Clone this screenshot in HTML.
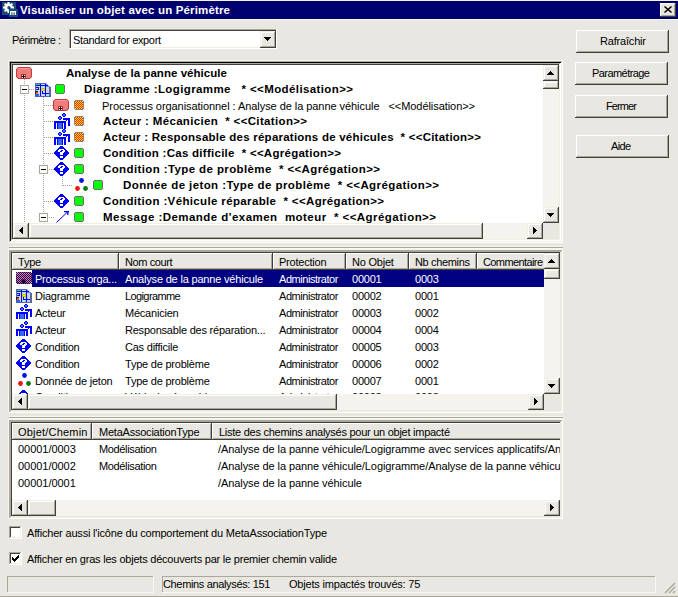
<!DOCTYPE html>
<html><head><meta charset="utf-8"><style>
html,body{margin:0;padding:0}
body{width:678px;height:597px;overflow:hidden;position:relative;background:#E8E7E1;font-family:"Liberation Sans",sans-serif;font-size:11px;color:#000}
.a{position:absolute}
.t{position:absolute;white-space:pre;line-height:13px;letter-spacing:-0.22px}
svg.ov{position:absolute;left:0;top:0}
</style></head><body>
<div class="a" style="left:0px;top:0px;width:678px;height:1px;background:#F6F5EF;"></div>
<div class="a" style="left:0px;top:1px;width:678px;height:18px;background:#000070;"></div>
<div class="a" style="left:0px;top:19px;width:678px;height:1px;background:#F8F7F2;"></div>
<div class="t" style="left:20.00px;top:4px;font-weight:bold;color:#fff;letter-spacing:0.158px;font-size:11.5px;">Visualiser un objet avec un Périmètre</div>
<div class="a" style="left:660px;top:3px;width:16px;height:14px;background:#E8E7E1;"></div>
<div class="a" style="left:660px;top:3px;width:15px;height:1px;background:#FFFFFF;"></div>
<div class="a" style="left:660px;top:3px;width:1px;height:13px;background:#FFFFFF;"></div>
<div class="a" style="left:660px;top:16px;width:16px;height:1px;background:#404040;"></div>
<div class="a" style="left:675px;top:3px;width:1px;height:14px;background:#404040;"></div>
<div class="a" style="left:661px;top:15px;width:14px;height:1px;background:#ACA899;"></div>
<div class="a" style="left:674px;top:4px;width:1px;height:12px;background:#ACA899;"></div>
<div class="t" style="left:12.00px;top:34px;letter-spacing:-0.480px;">Périmètre :</div>
<div class="a" style="left:69px;top:29px;width:208px;height:20px;background:#FFFFFF;"></div>
<div class="a" style="left:69px;top:29px;width:208px;height:1px;background:#ACA899;"></div>
<div class="a" style="left:69px;top:29px;width:1px;height:20px;background:#ACA899;"></div>
<div class="a" style="left:70px;top:30px;width:206px;height:1px;background:#404040;"></div>
<div class="a" style="left:70px;top:30px;width:1px;height:18px;background:#404040;"></div>
<div class="a" style="left:71px;top:47px;width:189px;height:1px;background:#F1EFE2;"></div>
<div class="a" style="left:69px;top:48px;width:208px;height:1px;background:#FFFFFF;"></div>
<div class="a" style="left:276px;top:29px;width:1px;height:20px;background:#FFFFFF;"></div>
<div class="t" style="left:73.00px;top:34px;letter-spacing:-0.342px;">Standard for export</div>
<div class="a" style="left:576px;top:30px;width:93px;height:23px;background:#E8E7E1;"></div>
<div class="a" style="left:576px;top:30px;width:92px;height:1px;background:#FFFFFF;"></div>
<div class="a" style="left:576px;top:30px;width:1px;height:22px;background:#FFFFFF;"></div>
<div class="a" style="left:576px;top:52px;width:93px;height:1px;background:#404040;"></div>
<div class="a" style="left:668px;top:30px;width:1px;height:23px;background:#404040;"></div>
<div class="a" style="left:577px;top:51px;width:91px;height:1px;background:#ACA899;"></div>
<div class="a" style="left:667px;top:31px;width:1px;height:21px;background:#ACA899;"></div>
<div class="t" style="left:600.00px;top:35px;letter-spacing:-0.189px;">Rafraîchir</div>
<div class="a" style="left:575px;top:62px;width:93px;height:23px;background:#E8E7E1;"></div>
<div class="a" style="left:575px;top:62px;width:92px;height:1px;background:#FFFFFF;"></div>
<div class="a" style="left:575px;top:62px;width:1px;height:22px;background:#FFFFFF;"></div>
<div class="a" style="left:575px;top:84px;width:93px;height:1px;background:#404040;"></div>
<div class="a" style="left:667px;top:62px;width:1px;height:23px;background:#404040;"></div>
<div class="a" style="left:576px;top:83px;width:91px;height:1px;background:#ACA899;"></div>
<div class="a" style="left:666px;top:63px;width:1px;height:21px;background:#ACA899;"></div>
<div class="t" style="left:592.00px;top:67px;letter-spacing:-0.560px;">Paramétrage</div>
<div class="a" style="left:575px;top:95px;width:93px;height:23px;background:#E8E7E1;"></div>
<div class="a" style="left:575px;top:95px;width:92px;height:1px;background:#FFFFFF;"></div>
<div class="a" style="left:575px;top:95px;width:1px;height:22px;background:#FFFFFF;"></div>
<div class="a" style="left:575px;top:117px;width:93px;height:1px;background:#404040;"></div>
<div class="a" style="left:667px;top:95px;width:1px;height:23px;background:#404040;"></div>
<div class="a" style="left:576px;top:116px;width:91px;height:1px;background:#ACA899;"></div>
<div class="a" style="left:666px;top:96px;width:1px;height:21px;background:#ACA899;"></div>
<div class="t" style="left:606.00px;top:100px;letter-spacing:-0.890px;">Fermer</div>
<div class="a" style="left:576px;top:135px;width:93px;height:23px;background:#E8E7E1;"></div>
<div class="a" style="left:576px;top:135px;width:92px;height:1px;background:#FFFFFF;"></div>
<div class="a" style="left:576px;top:135px;width:1px;height:22px;background:#FFFFFF;"></div>
<div class="a" style="left:576px;top:157px;width:93px;height:1px;background:#404040;"></div>
<div class="a" style="left:668px;top:135px;width:1px;height:23px;background:#404040;"></div>
<div class="a" style="left:577px;top:156px;width:91px;height:1px;background:#ACA899;"></div>
<div class="a" style="left:667px;top:136px;width:1px;height:21px;background:#ACA899;"></div>
<div class="t" style="left:611.00px;top:140px;letter-spacing:-0.667px;">Aide</div>
<div class="a" style="left:260px;top:31px;width:16px;height:17px;background:#E8E7E1;"></div>
<div class="a" style="left:260px;top:31px;width:16px;height:1px;background:#F1EFE2;"></div>
<div class="a" style="left:260px;top:31px;width:1px;height:17px;background:#F1EFE2;"></div>
<div class="a" style="left:261px;top:32px;width:14px;height:1px;background:#FFFFFF;"></div>
<div class="a" style="left:261px;top:32px;width:1px;height:15px;background:#FFFFFF;"></div>
<div class="a" style="left:260px;top:47px;width:16px;height:1px;background:#404040;"></div>
<div class="a" style="left:275px;top:31px;width:1px;height:17px;background:#404040;"></div>
<div class="a" style="left:261px;top:46px;width:14px;height:1px;background:#ACA899;"></div>
<div class="a" style="left:274px;top:32px;width:1px;height:15px;background:#ACA899;"></div>
<div class="a" style="left:8px;top:60px;width:555px;height:1px;background:#F5F4F0;"></div>
<div class="a" style="left:8px;top:60px;width:1px;height:183px;background:#F5F4F0;"></div>
<div class="a" style="left:9px;top:61px;width:554px;height:1px;background:#ACA899;"></div>
<div class="a" style="left:9px;top:61px;width:1px;height:182px;background:#ACA899;"></div>
<div class="a" style="left:9px;top:242px;width:554px;height:1px;background:#FFFFFF;"></div>
<div class="a" style="left:562px;top:61px;width:1px;height:182px;background:#FFFFFF;"></div>
<div class="a" style="left:10px;top:62px;width:552px;height:1px;background:#000;"></div>
<div class="a" style="left:10px;top:62px;width:1px;height:180px;background:#000;"></div>
<div class="a" style="left:10px;top:241px;width:552px;height:1px;background:#F1EFE2;"></div>
<div class="a" style="left:561px;top:62px;width:1px;height:180px;background:#F1EFE2;"></div>
<div class="a" style="left:11px;top:63px;width:550px;height:1px;background:#ACA899;"></div>
<div class="a" style="left:11px;top:63px;width:1px;height:178px;background:#ACA899;"></div>
<div class="a" style="left:11px;top:240px;width:550px;height:1px;background:#FFFFFF;"></div>
<div class="a" style="left:560px;top:63px;width:1px;height:178px;background:#FFFFFF;"></div>
<div class="a" style="left:12px;top:64px;width:548px;height:1px;background:#404040;"></div>
<div class="a" style="left:12px;top:64px;width:1px;height:176px;background:#404040;"></div>
<div class="a" style="left:12px;top:239px;width:548px;height:1px;background:#F1EFE2;"></div>
<div class="a" style="left:559px;top:64px;width:1px;height:176px;background:#F1EFE2;"></div>
<div class="a" style="left:13px;top:65px;width:546px;height:174px;background:#fff;"></div>
<div class="t" style="left:66.00px;top:67px;font-weight:bold;letter-spacing:0.044px;font-size:11.5px;">Analyse de la panne véhicule</div>
<div class="t" style="left:84.00px;top:83px;font-weight:bold;letter-spacing:0.388px;font-size:11.5px;">Diagramme :Logigramme   * &lt;&lt;Modélisation&gt;&gt;</div>
<div class="t" style="left:102.00px;top:100px;letter-spacing:-0.058px;">Processus organisationnel : Analyse de la panne véhicule   &lt;&lt;Modélisation&gt;&gt;</div>
<div class="t" style="left:103.00px;top:115px;font-weight:bold;letter-spacing:0.343px;font-size:11.5px;">Acteur : Mécanicien  * &lt;&lt;Citation&gt;&gt;</div>
<div class="t" style="left:103.00px;top:131px;font-weight:bold;letter-spacing:0.234px;font-size:11.5px;">Acteur : Responsable des réparations de véhicules  * &lt;&lt;Citation&gt;&gt;</div>
<div class="t" style="left:103.00px;top:147px;font-weight:bold;letter-spacing:0.272px;font-size:11.5px;">Condition :Cas difficile  * &lt;&lt;Agrégation&gt;&gt;</div>
<div class="t" style="left:103.00px;top:163px;font-weight:bold;letter-spacing:0.390px;font-size:11.5px;">Condition :Type de problème  * &lt;&lt;Agrégation&gt;&gt;</div>
<div class="t" style="left:123.00px;top:179px;font-weight:bold;letter-spacing:0.407px;font-size:11.5px;">Donnée de jeton :Type de problème  * &lt;&lt;Agrégation&gt;&gt;</div>
<div class="t" style="left:103.00px;top:195px;font-weight:bold;letter-spacing:0.358px;font-size:11.5px;">Condition :Véhicule réparable  * &lt;&lt;Agrégation&gt;&gt;</div>
<div class="t" style="left:103.00px;top:211px;font-weight:bold;letter-spacing:0.457px;font-size:11.5px;">Message :Demande d&#x27;examen  moteur  * &lt;&lt;Agrégation&gt;&gt;</div>
<svg class="ov" width="678" height="597" viewBox="0 0 678 597"><path d="M664.5 6.5 L671.5 12.5 M671.5 6.5 L664.5 12.5" stroke="#000" stroke-width="1.6" fill="none"/><rect x="2" y="2" width="14" height="13" fill="#1B4C78"/><rect x="9" y="9" width="9" height="8" fill="#1B4C78"/><g fill="#fff"><circle cx="8.5" cy="7.5" r="4.2"/><rect x="7.5" y="2" width="2" height="2.5" transform="rotate(0 8.5 7.5)"/><rect x="7.5" y="2" width="2" height="2.5" transform="rotate(45 8.5 7.5)"/><rect x="7.5" y="2" width="2" height="2.5" transform="rotate(90 8.5 7.5)"/><rect x="7.5" y="2" width="2" height="2.5" transform="rotate(135 8.5 7.5)"/><rect x="7.5" y="2" width="2" height="2.5" transform="rotate(180 8.5 7.5)"/><rect x="7.5" y="2" width="2" height="2.5" transform="rotate(225 8.5 7.5)"/><rect x="7.5" y="2" width="2" height="2.5" transform="rotate(270 8.5 7.5)"/><rect x="7.5" y="2" width="2" height="2.5" transform="rotate(315 8.5 7.5)"/></g><circle cx="9" cy="7.8" r="1.7" fill="#1B4C78"/><path d="M9 7.8 L14 12.5 L14 9 Z" fill="#1B4C78"/><rect x="9" y="9" width="9" height="8" fill="#1B4C78"/><g fill="#fff"><rect x="10" y="11" width="6" height="1.3"/><rect x="10" y="11" width="1.3" height="4"/><rect x="12.4" y="11" width="1.2" height="4"/><rect x="14.7" y="11" width="1.3" height="4"/></g><rect x="264" y="37" width="7" height="1" fill="#000"/><rect x="265" y="38" width="5" height="1" fill="#000"/><rect x="266" y="39" width="3" height="1" fill="#000"/><rect x="267" y="40" width="1" height="1" fill="#000"/><rect x="24" y="79" width="1" height="1" fill="#A8A498"/><rect x="24" y="81" width="1" height="1" fill="#A8A498"/><rect x="24" y="83" width="1" height="1" fill="#A8A498"/><rect x="24" y="85" width="1" height="1" fill="#A8A498"/><rect x="24" y="87" width="1" height="1" fill="#A8A498"/><rect x="24" y="89" width="1" height="1" fill="#A8A498"/><rect x="24" y="91" width="1" height="1" fill="#A8A498"/><rect x="24" y="93" width="1" height="1" fill="#A8A498"/><rect x="24" y="95" width="1" height="1" fill="#A8A498"/><rect x="24" y="97" width="1" height="1" fill="#A8A498"/><rect x="24" y="99" width="1" height="1" fill="#A8A498"/><rect x="24" y="101" width="1" height="1" fill="#A8A498"/><rect x="24" y="103" width="1" height="1" fill="#A8A498"/><rect x="24" y="105" width="1" height="1" fill="#A8A498"/><rect x="24" y="107" width="1" height="1" fill="#A8A498"/><rect x="24" y="109" width="1" height="1" fill="#A8A498"/><rect x="24" y="111" width="1" height="1" fill="#A8A498"/><rect x="24" y="113" width="1" height="1" fill="#A8A498"/><rect x="24" y="115" width="1" height="1" fill="#A8A498"/><rect x="24" y="117" width="1" height="1" fill="#A8A498"/><rect x="24" y="119" width="1" height="1" fill="#A8A498"/><rect x="24" y="121" width="1" height="1" fill="#A8A498"/><rect x="24" y="123" width="1" height="1" fill="#A8A498"/><rect x="24" y="125" width="1" height="1" fill="#A8A498"/><rect x="24" y="127" width="1" height="1" fill="#A8A498"/><rect x="24" y="129" width="1" height="1" fill="#A8A498"/><rect x="24" y="131" width="1" height="1" fill="#A8A498"/><rect x="24" y="133" width="1" height="1" fill="#A8A498"/><rect x="24" y="135" width="1" height="1" fill="#A8A498"/><rect x="24" y="137" width="1" height="1" fill="#A8A498"/><rect x="24" y="139" width="1" height="1" fill="#A8A498"/><rect x="24" y="141" width="1" height="1" fill="#A8A498"/><rect x="24" y="143" width="1" height="1" fill="#A8A498"/><rect x="24" y="145" width="1" height="1" fill="#A8A498"/><rect x="24" y="147" width="1" height="1" fill="#A8A498"/><rect x="24" y="149" width="1" height="1" fill="#A8A498"/><rect x="24" y="151" width="1" height="1" fill="#A8A498"/><rect x="24" y="153" width="1" height="1" fill="#A8A498"/><rect x="24" y="155" width="1" height="1" fill="#A8A498"/><rect x="24" y="157" width="1" height="1" fill="#A8A498"/><rect x="24" y="159" width="1" height="1" fill="#A8A498"/><rect x="24" y="161" width="1" height="1" fill="#A8A498"/><rect x="24" y="163" width="1" height="1" fill="#A8A498"/><rect x="24" y="165" width="1" height="1" fill="#A8A498"/><rect x="24" y="167" width="1" height="1" fill="#A8A498"/><rect x="24" y="169" width="1" height="1" fill="#A8A498"/><rect x="24" y="171" width="1" height="1" fill="#A8A498"/><rect x="24" y="173" width="1" height="1" fill="#A8A498"/><rect x="24" y="175" width="1" height="1" fill="#A8A498"/><rect x="24" y="177" width="1" height="1" fill="#A8A498"/><rect x="24" y="179" width="1" height="1" fill="#A8A498"/><rect x="24" y="181" width="1" height="1" fill="#A8A498"/><rect x="24" y="183" width="1" height="1" fill="#A8A498"/><rect x="24" y="185" width="1" height="1" fill="#A8A498"/><rect x="24" y="187" width="1" height="1" fill="#A8A498"/><rect x="24" y="189" width="1" height="1" fill="#A8A498"/><rect x="24" y="191" width="1" height="1" fill="#A8A498"/><rect x="24" y="193" width="1" height="1" fill="#A8A498"/><rect x="24" y="195" width="1" height="1" fill="#A8A498"/><rect x="24" y="197" width="1" height="1" fill="#A8A498"/><rect x="24" y="199" width="1" height="1" fill="#A8A498"/><rect x="24" y="201" width="1" height="1" fill="#A8A498"/><rect x="24" y="203" width="1" height="1" fill="#A8A498"/><rect x="24" y="205" width="1" height="1" fill="#A8A498"/><rect x="24" y="207" width="1" height="1" fill="#A8A498"/><rect x="24" y="209" width="1" height="1" fill="#A8A498"/><rect x="24" y="211" width="1" height="1" fill="#A8A498"/><rect x="24" y="213" width="1" height="1" fill="#A8A498"/><rect x="24" y="215" width="1" height="1" fill="#A8A498"/><rect x="24" y="217" width="1" height="1" fill="#A8A498"/><rect x="24" y="219" width="1" height="1" fill="#A8A498"/><rect x="24" y="221" width="1" height="1" fill="#A8A498"/><rect x="43" y="97" width="1" height="1" fill="#A8A498"/><rect x="43" y="99" width="1" height="1" fill="#A8A498"/><rect x="43" y="101" width="1" height="1" fill="#A8A498"/><rect x="43" y="103" width="1" height="1" fill="#A8A498"/><rect x="43" y="105" width="1" height="1" fill="#A8A498"/><rect x="43" y="107" width="1" height="1" fill="#A8A498"/><rect x="43" y="109" width="1" height="1" fill="#A8A498"/><rect x="43" y="111" width="1" height="1" fill="#A8A498"/><rect x="43" y="113" width="1" height="1" fill="#A8A498"/><rect x="43" y="115" width="1" height="1" fill="#A8A498"/><rect x="43" y="117" width="1" height="1" fill="#A8A498"/><rect x="43" y="119" width="1" height="1" fill="#A8A498"/><rect x="43" y="121" width="1" height="1" fill="#A8A498"/><rect x="43" y="123" width="1" height="1" fill="#A8A498"/><rect x="43" y="125" width="1" height="1" fill="#A8A498"/><rect x="43" y="127" width="1" height="1" fill="#A8A498"/><rect x="43" y="129" width="1" height="1" fill="#A8A498"/><rect x="43" y="131" width="1" height="1" fill="#A8A498"/><rect x="43" y="133" width="1" height="1" fill="#A8A498"/><rect x="43" y="135" width="1" height="1" fill="#A8A498"/><rect x="43" y="137" width="1" height="1" fill="#A8A498"/><rect x="43" y="139" width="1" height="1" fill="#A8A498"/><rect x="43" y="141" width="1" height="1" fill="#A8A498"/><rect x="43" y="143" width="1" height="1" fill="#A8A498"/><rect x="43" y="145" width="1" height="1" fill="#A8A498"/><rect x="43" y="147" width="1" height="1" fill="#A8A498"/><rect x="43" y="149" width="1" height="1" fill="#A8A498"/><rect x="43" y="151" width="1" height="1" fill="#A8A498"/><rect x="43" y="153" width="1" height="1" fill="#A8A498"/><rect x="43" y="155" width="1" height="1" fill="#A8A498"/><rect x="43" y="157" width="1" height="1" fill="#A8A498"/><rect x="43" y="159" width="1" height="1" fill="#A8A498"/><rect x="43" y="161" width="1" height="1" fill="#A8A498"/><rect x="43" y="163" width="1" height="1" fill="#A8A498"/><rect x="43" y="165" width="1" height="1" fill="#A8A498"/><rect x="43" y="167" width="1" height="1" fill="#A8A498"/><rect x="43" y="169" width="1" height="1" fill="#A8A498"/><rect x="43" y="171" width="1" height="1" fill="#A8A498"/><rect x="43" y="173" width="1" height="1" fill="#A8A498"/><rect x="43" y="175" width="1" height="1" fill="#A8A498"/><rect x="43" y="177" width="1" height="1" fill="#A8A498"/><rect x="43" y="179" width="1" height="1" fill="#A8A498"/><rect x="43" y="181" width="1" height="1" fill="#A8A498"/><rect x="43" y="183" width="1" height="1" fill="#A8A498"/><rect x="43" y="185" width="1" height="1" fill="#A8A498"/><rect x="43" y="187" width="1" height="1" fill="#A8A498"/><rect x="43" y="189" width="1" height="1" fill="#A8A498"/><rect x="43" y="191" width="1" height="1" fill="#A8A498"/><rect x="43" y="193" width="1" height="1" fill="#A8A498"/><rect x="43" y="195" width="1" height="1" fill="#A8A498"/><rect x="43" y="197" width="1" height="1" fill="#A8A498"/><rect x="43" y="199" width="1" height="1" fill="#A8A498"/><rect x="43" y="201" width="1" height="1" fill="#A8A498"/><rect x="43" y="203" width="1" height="1" fill="#A8A498"/><rect x="43" y="205" width="1" height="1" fill="#A8A498"/><rect x="43" y="207" width="1" height="1" fill="#A8A498"/><rect x="43" y="209" width="1" height="1" fill="#A8A498"/><rect x="43" y="211" width="1" height="1" fill="#A8A498"/><rect x="43" y="213" width="1" height="1" fill="#A8A498"/><rect x="43" y="215" width="1" height="1" fill="#A8A498"/><rect x="43" y="217" width="1" height="1" fill="#A8A498"/><rect x="29" y="89" width="1" height="1" fill="#A8A498"/><rect x="31" y="89" width="1" height="1" fill="#A8A498"/><rect x="33" y="89" width="1" height="1" fill="#A8A498"/><rect x="44" y="105" width="1" height="1" fill="#A8A498"/><rect x="46" y="105" width="1" height="1" fill="#A8A498"/><rect x="48" y="105" width="1" height="1" fill="#A8A498"/><rect x="50" y="105" width="1" height="1" fill="#A8A498"/><rect x="52" y="105" width="1" height="1" fill="#A8A498"/><rect x="44" y="121" width="1" height="1" fill="#A8A498"/><rect x="46" y="121" width="1" height="1" fill="#A8A498"/><rect x="48" y="121" width="1" height="1" fill="#A8A498"/><rect x="50" y="121" width="1" height="1" fill="#A8A498"/><rect x="52" y="121" width="1" height="1" fill="#A8A498"/><rect x="44" y="137" width="1" height="1" fill="#A8A498"/><rect x="46" y="137" width="1" height="1" fill="#A8A498"/><rect x="48" y="137" width="1" height="1" fill="#A8A498"/><rect x="50" y="137" width="1" height="1" fill="#A8A498"/><rect x="52" y="137" width="1" height="1" fill="#A8A498"/><rect x="44" y="153" width="1" height="1" fill="#A8A498"/><rect x="46" y="153" width="1" height="1" fill="#A8A498"/><rect x="48" y="153" width="1" height="1" fill="#A8A498"/><rect x="50" y="153" width="1" height="1" fill="#A8A498"/><rect x="52" y="153" width="1" height="1" fill="#A8A498"/><rect x="44" y="201" width="1" height="1" fill="#A8A498"/><rect x="46" y="201" width="1" height="1" fill="#A8A498"/><rect x="48" y="201" width="1" height="1" fill="#A8A498"/><rect x="50" y="201" width="1" height="1" fill="#A8A498"/><rect x="52" y="201" width="1" height="1" fill="#A8A498"/><rect x="49" y="169" width="1" height="1" fill="#A8A498"/><rect x="51" y="169" width="1" height="1" fill="#A8A498"/><rect x="53" y="169" width="1" height="1" fill="#A8A498"/><rect x="49" y="217" width="1" height="1" fill="#A8A498"/><rect x="51" y="217" width="1" height="1" fill="#A8A498"/><rect x="53" y="217" width="1" height="1" fill="#A8A498"/><rect x="62" y="177" width="1" height="1" fill="#A8A498"/><rect x="62" y="179" width="1" height="1" fill="#A8A498"/><rect x="62" y="181" width="1" height="1" fill="#A8A498"/><rect x="62" y="183" width="1" height="1" fill="#A8A498"/><rect x="62" y="185" width="1" height="1" fill="#A8A498"/><rect x="63" y="185" width="1" height="1" fill="#A8A498"/><rect x="65" y="185" width="1" height="1" fill="#A8A498"/><rect x="67" y="185" width="1" height="1" fill="#A8A498"/><rect x="69" y="185" width="1" height="1" fill="#A8A498"/><rect x="71" y="185" width="1" height="1" fill="#A8A498"/><polygon points="18,67 30,67 32,69 32,77 30,79 18,79 16,77 16,69" fill="#F07C7C" stroke="none"/><rect x="18" y="67" width="12" height="1" fill="#C03A36"/><rect x="18" y="78" width="12" height="1" fill="#C03A36"/><rect x="16" y="69" width="1" height="8" fill="#C03A36"/><rect x="31" y="69" width="1" height="8" fill="#C03A36"/><rect x="17" y="68" width="1" height="1" fill="#C03A36"/><rect x="30" y="68" width="1" height="1" fill="#C03A36"/><rect x="17" y="77" width="1" height="1" fill="#C03A36"/><rect x="30" y="77" width="1" height="1" fill="#C03A36"/><rect x="18" y="68" width="12" height="1" fill="#F49A9A"/><rect x="21" y="74" width="5" height="5" fill="#B03030"/><rect x="22" y="75" width="3" height="3" fill="#fff"/><rect x="23" y="75" width="1" height="3" fill="#000"/><rect x="22" y="76" width="3" height="1" fill="#000"/><rect x="29" y="75" width="1" height="2" fill="#A88"/><rect x="20" y="85" width="9" height="1" fill="#ACA899"/><rect x="20" y="93" width="9" height="1" fill="#ACA899"/><rect x="20" y="85" width="1" height="9" fill="#ACA899"/><rect x="28" y="85" width="1" height="9" fill="#ACA899"/><rect x="21" y="86" width="7" height="7" fill="#fff"/><rect x="22" y="89" width="5" height="1" fill="#000"/><rect x="35" y="83" width="15" height="14" fill="#5A64A8"/><rect x="36" y="84" width="13" height="12" fill="#C4D8F6"/><rect x="46" y="83" width="4" height="3" fill="#fff"/><polygon points="46,83 50,87 46,87" fill="#7090D0"/><rect x="50" y="87" width="1" height="10" fill="#5A64A8"/><rect x="36" y="84" width="4" height="1" fill="#40D040"/><rect x="41" y="84" width="4" height="1" fill="#A0E8F8"/><rect x="36" y="85" width="12" height="1" fill="#0000FF"/><rect x="40" y="84" width="1" height="12" fill="#0000FF"/><rect x="45" y="84" width="1" height="12" fill="#0000FF"/><rect x="36" y="87" width="3" height="1" fill="#0000FF"/><rect x="38" y="87" width="1" height="3" fill="#0000FF"/><rect x="36" y="89" width="3" height="1" fill="#0000FF"/><rect x="41" y="88" width="4" height="3" fill="#C8C000"/><rect x="42" y="89" width="2" height="1" fill="#FFFF00"/><rect x="42" y="91" width="1" height="3" fill="#0000FF"/><rect x="42" y="93" width="7" height="1" fill="#0000FF"/><rect x="35" y="91" width="3" height="3" fill="#202020"/><rect x="36" y="92" width="2" height="2" fill="#FF6010"/><rect x="35" y="94" width="4" height="3" fill="#3060E0"/><rect x="56" y="84" width="8" height="1" fill="#7A6A7A"/><rect x="56" y="93" width="8" height="1" fill="#7A6A7A"/><rect x="55" y="85" width="1" height="8" fill="#7A6A7A"/><rect x="64" y="85" width="1" height="8" fill="#7A6A7A"/><rect x="56" y="85" width="8" height="8" fill="#00FF00"/><polygon points="55,99 67,99 69,101 69,109 67,111 55,111 53,109 53,101" fill="#F07C7C" stroke="none"/><rect x="55" y="99" width="12" height="1" fill="#C03A36"/><rect x="55" y="110" width="12" height="1" fill="#C03A36"/><rect x="53" y="101" width="1" height="8" fill="#C03A36"/><rect x="68" y="101" width="1" height="8" fill="#C03A36"/><rect x="54" y="100" width="1" height="1" fill="#C03A36"/><rect x="67" y="100" width="1" height="1" fill="#C03A36"/><rect x="54" y="109" width="1" height="1" fill="#C03A36"/><rect x="67" y="109" width="1" height="1" fill="#C03A36"/><rect x="55" y="100" width="12" height="1" fill="#F49A9A"/><rect x="58" y="106" width="5" height="5" fill="#B03030"/><rect x="59" y="107" width="3" height="3" fill="#fff"/><rect x="60" y="107" width="1" height="3" fill="#000"/><rect x="59" y="108" width="3" height="1" fill="#000"/><rect x="66" y="107" width="1" height="2" fill="#A88"/><rect x="75" y="100" width="8" height="1" fill="#888"/><rect x="75" y="109" width="8" height="1" fill="#888"/><rect x="74" y="101" width="1" height="8" fill="#888"/><rect x="83" y="101" width="1" height="8" fill="#888"/><rect x="75" y="101" width="8" height="8" fill="#FFD400"/><rect x="75" y="101" width="1" height="1" fill="#FF2A00"/><rect x="77" y="101" width="1" height="1" fill="#FF2A00"/><rect x="79" y="101" width="1" height="1" fill="#FF2A00"/><rect x="81" y="101" width="1" height="1" fill="#FF2A00"/><rect x="76" y="102" width="1" height="1" fill="#FF2A00"/><rect x="78" y="102" width="1" height="1" fill="#FF2A00"/><rect x="80" y="102" width="1" height="1" fill="#FF2A00"/><rect x="82" y="102" width="1" height="1" fill="#FF2A00"/><rect x="75" y="103" width="1" height="1" fill="#FF2A00"/><rect x="77" y="103" width="1" height="1" fill="#FF2A00"/><rect x="79" y="103" width="1" height="1" fill="#FF2A00"/><rect x="81" y="103" width="1" height="1" fill="#FF2A00"/><rect x="76" y="104" width="1" height="1" fill="#FF2A00"/><rect x="78" y="104" width="1" height="1" fill="#FF2A00"/><rect x="80" y="104" width="1" height="1" fill="#FF2A00"/><rect x="82" y="104" width="1" height="1" fill="#FF2A00"/><rect x="75" y="105" width="1" height="1" fill="#FF2A00"/><rect x="77" y="105" width="1" height="1" fill="#FF2A00"/><rect x="79" y="105" width="1" height="1" fill="#FF2A00"/><rect x="81" y="105" width="1" height="1" fill="#FF2A00"/><rect x="76" y="106" width="1" height="1" fill="#FF2A00"/><rect x="78" y="106" width="1" height="1" fill="#FF2A00"/><rect x="80" y="106" width="1" height="1" fill="#FF2A00"/><rect x="82" y="106" width="1" height="1" fill="#FF2A00"/><rect x="75" y="107" width="1" height="1" fill="#FF2A00"/><rect x="77" y="107" width="1" height="1" fill="#FF2A00"/><rect x="79" y="107" width="1" height="1" fill="#FF2A00"/><rect x="81" y="107" width="1" height="1" fill="#FF2A00"/><rect x="76" y="108" width="1" height="1" fill="#FF2A00"/><rect x="78" y="108" width="1" height="1" fill="#FF2A00"/><rect x="80" y="108" width="1" height="1" fill="#FF2A00"/><rect x="82" y="108" width="1" height="1" fill="#FF2A00"/><rect x="63" y="113" width="2" height="1" fill="#0000FF"/><rect x="62" y="114" width="4" height="2" fill="#0000FF"/><rect x="63" y="116" width="2" height="1" fill="#0000FF"/><rect x="63" y="114" width="2" height="2" fill="#3366FF"/><rect x="59" y="116" width="2" height="1" fill="#0000FF"/><rect x="58" y="117" width="4" height="2" fill="#0000FF"/><rect x="59" y="119" width="2" height="1" fill="#0000FF"/><rect x="59" y="117" width="2" height="2" fill="#3366FF"/><rect x="63" y="118" width="6" height="2" fill="#0000FF"/><rect x="68" y="118" width="2" height="8" fill="#0000FF"/><rect x="66" y="120" width="1" height="1" fill="#0000FF"/><rect x="54" y="121" width="12" height="2" fill="#0000FF"/><rect x="54" y="122" width="2" height="7" fill="#0000FF"/><rect x="64" y="122" width="2" height="7" fill="#0000FF"/><rect x="57" y="123" width="6" height="6" fill="#3366FF"/><rect x="57" y="123" width="1" height="6" fill="#0000FF"/><rect x="62" y="123" width="1" height="6" fill="#0000FF"/><rect x="75" y="116" width="8" height="1" fill="#888"/><rect x="75" y="125" width="8" height="1" fill="#888"/><rect x="74" y="117" width="1" height="8" fill="#888"/><rect x="83" y="117" width="1" height="8" fill="#888"/><rect x="75" y="117" width="8" height="8" fill="#FFD400"/><rect x="75" y="117" width="1" height="1" fill="#FF2A00"/><rect x="77" y="117" width="1" height="1" fill="#FF2A00"/><rect x="79" y="117" width="1" height="1" fill="#FF2A00"/><rect x="81" y="117" width="1" height="1" fill="#FF2A00"/><rect x="76" y="118" width="1" height="1" fill="#FF2A00"/><rect x="78" y="118" width="1" height="1" fill="#FF2A00"/><rect x="80" y="118" width="1" height="1" fill="#FF2A00"/><rect x="82" y="118" width="1" height="1" fill="#FF2A00"/><rect x="75" y="119" width="1" height="1" fill="#FF2A00"/><rect x="77" y="119" width="1" height="1" fill="#FF2A00"/><rect x="79" y="119" width="1" height="1" fill="#FF2A00"/><rect x="81" y="119" width="1" height="1" fill="#FF2A00"/><rect x="76" y="120" width="1" height="1" fill="#FF2A00"/><rect x="78" y="120" width="1" height="1" fill="#FF2A00"/><rect x="80" y="120" width="1" height="1" fill="#FF2A00"/><rect x="82" y="120" width="1" height="1" fill="#FF2A00"/><rect x="75" y="121" width="1" height="1" fill="#FF2A00"/><rect x="77" y="121" width="1" height="1" fill="#FF2A00"/><rect x="79" y="121" width="1" height="1" fill="#FF2A00"/><rect x="81" y="121" width="1" height="1" fill="#FF2A00"/><rect x="76" y="122" width="1" height="1" fill="#FF2A00"/><rect x="78" y="122" width="1" height="1" fill="#FF2A00"/><rect x="80" y="122" width="1" height="1" fill="#FF2A00"/><rect x="82" y="122" width="1" height="1" fill="#FF2A00"/><rect x="75" y="123" width="1" height="1" fill="#FF2A00"/><rect x="77" y="123" width="1" height="1" fill="#FF2A00"/><rect x="79" y="123" width="1" height="1" fill="#FF2A00"/><rect x="81" y="123" width="1" height="1" fill="#FF2A00"/><rect x="76" y="124" width="1" height="1" fill="#FF2A00"/><rect x="78" y="124" width="1" height="1" fill="#FF2A00"/><rect x="80" y="124" width="1" height="1" fill="#FF2A00"/><rect x="82" y="124" width="1" height="1" fill="#FF2A00"/><rect x="63" y="129" width="2" height="1" fill="#0000FF"/><rect x="62" y="130" width="4" height="2" fill="#0000FF"/><rect x="63" y="132" width="2" height="1" fill="#0000FF"/><rect x="63" y="130" width="2" height="2" fill="#3366FF"/><rect x="59" y="132" width="2" height="1" fill="#0000FF"/><rect x="58" y="133" width="4" height="2" fill="#0000FF"/><rect x="59" y="135" width="2" height="1" fill="#0000FF"/><rect x="59" y="133" width="2" height="2" fill="#3366FF"/><rect x="63" y="134" width="6" height="2" fill="#0000FF"/><rect x="68" y="134" width="2" height="8" fill="#0000FF"/><rect x="66" y="136" width="1" height="1" fill="#0000FF"/><rect x="54" y="137" width="12" height="2" fill="#0000FF"/><rect x="54" y="138" width="2" height="7" fill="#0000FF"/><rect x="64" y="138" width="2" height="7" fill="#0000FF"/><rect x="57" y="139" width="6" height="6" fill="#3366FF"/><rect x="57" y="139" width="1" height="6" fill="#0000FF"/><rect x="62" y="139" width="1" height="6" fill="#0000FF"/><rect x="75" y="132" width="8" height="1" fill="#888"/><rect x="75" y="141" width="8" height="1" fill="#888"/><rect x="74" y="133" width="1" height="8" fill="#888"/><rect x="83" y="133" width="1" height="8" fill="#888"/><rect x="75" y="133" width="8" height="8" fill="#FFD400"/><rect x="75" y="133" width="1" height="1" fill="#FF2A00"/><rect x="77" y="133" width="1" height="1" fill="#FF2A00"/><rect x="79" y="133" width="1" height="1" fill="#FF2A00"/><rect x="81" y="133" width="1" height="1" fill="#FF2A00"/><rect x="76" y="134" width="1" height="1" fill="#FF2A00"/><rect x="78" y="134" width="1" height="1" fill="#FF2A00"/><rect x="80" y="134" width="1" height="1" fill="#FF2A00"/><rect x="82" y="134" width="1" height="1" fill="#FF2A00"/><rect x="75" y="135" width="1" height="1" fill="#FF2A00"/><rect x="77" y="135" width="1" height="1" fill="#FF2A00"/><rect x="79" y="135" width="1" height="1" fill="#FF2A00"/><rect x="81" y="135" width="1" height="1" fill="#FF2A00"/><rect x="76" y="136" width="1" height="1" fill="#FF2A00"/><rect x="78" y="136" width="1" height="1" fill="#FF2A00"/><rect x="80" y="136" width="1" height="1" fill="#FF2A00"/><rect x="82" y="136" width="1" height="1" fill="#FF2A00"/><rect x="75" y="137" width="1" height="1" fill="#FF2A00"/><rect x="77" y="137" width="1" height="1" fill="#FF2A00"/><rect x="79" y="137" width="1" height="1" fill="#FF2A00"/><rect x="81" y="137" width="1" height="1" fill="#FF2A00"/><rect x="76" y="138" width="1" height="1" fill="#FF2A00"/><rect x="78" y="138" width="1" height="1" fill="#FF2A00"/><rect x="80" y="138" width="1" height="1" fill="#FF2A00"/><rect x="82" y="138" width="1" height="1" fill="#FF2A00"/><rect x="75" y="139" width="1" height="1" fill="#FF2A00"/><rect x="77" y="139" width="1" height="1" fill="#FF2A00"/><rect x="79" y="139" width="1" height="1" fill="#FF2A00"/><rect x="81" y="139" width="1" height="1" fill="#FF2A00"/><rect x="76" y="140" width="1" height="1" fill="#FF2A00"/><rect x="78" y="140" width="1" height="1" fill="#FF2A00"/><rect x="80" y="140" width="1" height="1" fill="#FF2A00"/><rect x="82" y="140" width="1" height="1" fill="#FF2A00"/><rect x="60" y="146" width="3" height="1" fill="#0000FF"/><rect x="59" y="147" width="5" height="1" fill="#0000FF"/><rect x="58" y="148" width="7" height="1" fill="#0000FF"/><rect x="57" y="149" width="9" height="1" fill="#0000FF"/><rect x="56" y="150" width="11" height="1" fill="#0000FF"/><rect x="55" y="151" width="13" height="1" fill="#0000FF"/><rect x="54" y="152" width="15" height="1" fill="#0000FF"/><rect x="54" y="153" width="15" height="1" fill="#0000FF"/><rect x="55" y="154" width="13" height="1" fill="#0000FF"/><rect x="56" y="155" width="11" height="1" fill="#0000FF"/><rect x="57" y="156" width="9" height="1" fill="#0000FF"/><rect x="58" y="157" width="7" height="1" fill="#0000FF"/><rect x="59" y="158" width="5" height="1" fill="#0000FF"/><rect x="60" y="159" width="3" height="1" fill="#0000FF"/><rect x="59" y="149" width="5" height="1" fill="#fff"/><rect x="58" y="150" width="3" height="1" fill="#fff"/><rect x="63" y="150" width="2" height="1" fill="#fff"/><rect x="58" y="151" width="2" height="1" fill="#fff"/><rect x="62" y="151" width="3" height="1" fill="#fff"/><rect x="60" y="152" width="4" height="1" fill="#fff"/><rect x="60" y="153" width="3" height="1" fill="#fff"/><rect x="60" y="154" width="3" height="1" fill="#fff"/><rect x="60" y="156" width="3" height="1" fill="#fff"/><rect x="60" y="157" width="3" height="1" fill="#fff"/><rect x="75" y="148" width="8" height="1" fill="#7A6A7A"/><rect x="75" y="157" width="8" height="1" fill="#7A6A7A"/><rect x="74" y="149" width="1" height="8" fill="#7A6A7A"/><rect x="83" y="149" width="1" height="8" fill="#7A6A7A"/><rect x="75" y="149" width="8" height="8" fill="#00FF00"/><rect x="39" y="165" width="9" height="1" fill="#ACA899"/><rect x="39" y="173" width="9" height="1" fill="#ACA899"/><rect x="39" y="165" width="1" height="9" fill="#ACA899"/><rect x="47" y="165" width="1" height="9" fill="#ACA899"/><rect x="40" y="166" width="7" height="7" fill="#fff"/><rect x="41" y="169" width="5" height="1" fill="#000"/><rect x="60" y="162" width="3" height="1" fill="#0000FF"/><rect x="59" y="163" width="5" height="1" fill="#0000FF"/><rect x="58" y="164" width="7" height="1" fill="#0000FF"/><rect x="57" y="165" width="9" height="1" fill="#0000FF"/><rect x="56" y="166" width="11" height="1" fill="#0000FF"/><rect x="55" y="167" width="13" height="1" fill="#0000FF"/><rect x="54" y="168" width="15" height="1" fill="#0000FF"/><rect x="54" y="169" width="15" height="1" fill="#0000FF"/><rect x="55" y="170" width="13" height="1" fill="#0000FF"/><rect x="56" y="171" width="11" height="1" fill="#0000FF"/><rect x="57" y="172" width="9" height="1" fill="#0000FF"/><rect x="58" y="173" width="7" height="1" fill="#0000FF"/><rect x="59" y="174" width="5" height="1" fill="#0000FF"/><rect x="60" y="175" width="3" height="1" fill="#0000FF"/><rect x="59" y="165" width="5" height="1" fill="#fff"/><rect x="58" y="166" width="3" height="1" fill="#fff"/><rect x="63" y="166" width="2" height="1" fill="#fff"/><rect x="58" y="167" width="2" height="1" fill="#fff"/><rect x="62" y="167" width="3" height="1" fill="#fff"/><rect x="60" y="168" width="4" height="1" fill="#fff"/><rect x="60" y="169" width="3" height="1" fill="#fff"/><rect x="60" y="170" width="3" height="1" fill="#fff"/><rect x="60" y="172" width="3" height="1" fill="#fff"/><rect x="60" y="173" width="3" height="1" fill="#fff"/><rect x="75" y="164" width="8" height="1" fill="#7A6A7A"/><rect x="75" y="173" width="8" height="1" fill="#7A6A7A"/><rect x="74" y="165" width="1" height="8" fill="#7A6A7A"/><rect x="83" y="165" width="1" height="8" fill="#7A6A7A"/><rect x="75" y="165" width="8" height="8" fill="#00FF00"/><circle cx="81.5" cy="180.5" r="2.4" fill="#0A0AF0"/><circle cx="77.5" cy="188.5" r="2.4" fill="#F01010"/><circle cx="85.5" cy="188.5" r="2.4" fill="#0A7A10"/><rect x="94" y="180" width="8" height="1" fill="#7A6A7A"/><rect x="94" y="189" width="8" height="1" fill="#7A6A7A"/><rect x="93" y="181" width="1" height="8" fill="#7A6A7A"/><rect x="102" y="181" width="1" height="8" fill="#7A6A7A"/><rect x="94" y="181" width="8" height="8" fill="#00FF00"/><rect x="60" y="194" width="3" height="1" fill="#0000FF"/><rect x="59" y="195" width="5" height="1" fill="#0000FF"/><rect x="58" y="196" width="7" height="1" fill="#0000FF"/><rect x="57" y="197" width="9" height="1" fill="#0000FF"/><rect x="56" y="198" width="11" height="1" fill="#0000FF"/><rect x="55" y="199" width="13" height="1" fill="#0000FF"/><rect x="54" y="200" width="15" height="1" fill="#0000FF"/><rect x="54" y="201" width="15" height="1" fill="#0000FF"/><rect x="55" y="202" width="13" height="1" fill="#0000FF"/><rect x="56" y="203" width="11" height="1" fill="#0000FF"/><rect x="57" y="204" width="9" height="1" fill="#0000FF"/><rect x="58" y="205" width="7" height="1" fill="#0000FF"/><rect x="59" y="206" width="5" height="1" fill="#0000FF"/><rect x="60" y="207" width="3" height="1" fill="#0000FF"/><rect x="59" y="197" width="5" height="1" fill="#fff"/><rect x="58" y="198" width="3" height="1" fill="#fff"/><rect x="63" y="198" width="2" height="1" fill="#fff"/><rect x="58" y="199" width="2" height="1" fill="#fff"/><rect x="62" y="199" width="3" height="1" fill="#fff"/><rect x="60" y="200" width="4" height="1" fill="#fff"/><rect x="60" y="201" width="3" height="1" fill="#fff"/><rect x="60" y="202" width="3" height="1" fill="#fff"/><rect x="60" y="204" width="3" height="1" fill="#fff"/><rect x="60" y="205" width="3" height="1" fill="#fff"/><rect x="75" y="196" width="8" height="1" fill="#7A6A7A"/><rect x="75" y="205" width="8" height="1" fill="#7A6A7A"/><rect x="74" y="197" width="1" height="8" fill="#7A6A7A"/><rect x="83" y="197" width="1" height="8" fill="#7A6A7A"/><rect x="75" y="197" width="8" height="8" fill="#00FF00"/><rect x="39" y="213" width="9" height="1" fill="#ACA899"/><rect x="39" y="221" width="9" height="1" fill="#ACA899"/><rect x="39" y="213" width="1" height="9" fill="#ACA899"/><rect x="47" y="213" width="1" height="9" fill="#ACA899"/><rect x="40" y="214" width="7" height="7" fill="#fff"/><rect x="41" y="217" width="5" height="1" fill="#000"/><path d="M56.5 222.5 L68 211.5" stroke="#0000FF" stroke-width="1"/><rect x="64" y="211.0" width="5" height="1.3" fill="#0000FF"/><rect x="67.2" y="211.0" width="1.3" height="4" fill="#0000FF"/><rect x="75" y="212" width="8" height="1" fill="#7A6A7A"/><rect x="75" y="221" width="8" height="1" fill="#7A6A7A"/><rect x="74" y="213" width="1" height="8" fill="#7A6A7A"/><rect x="83" y="213" width="1" height="8" fill="#7A6A7A"/><rect x="75" y="213" width="8" height="8" fill="#00FF00"/></svg>
<div class="a" style="left:543px;top:65px;width:16px;height:158px;background:#F4F3EE;"></div>
<div class="a" style="left:543px;top:65px;width:16px;height:16px;background:#E8E7E1;"></div>
<div class="a" style="left:543px;top:65px;width:16px;height:1px;background:#F1EFE2;"></div>
<div class="a" style="left:543px;top:65px;width:1px;height:16px;background:#F1EFE2;"></div>
<div class="a" style="left:544px;top:66px;width:14px;height:1px;background:#FFFFFF;"></div>
<div class="a" style="left:544px;top:66px;width:1px;height:14px;background:#FFFFFF;"></div>
<div class="a" style="left:543px;top:80px;width:16px;height:1px;background:#404040;"></div>
<div class="a" style="left:558px;top:65px;width:1px;height:16px;background:#404040;"></div>
<div class="a" style="left:544px;top:79px;width:14px;height:1px;background:#ACA899;"></div>
<div class="a" style="left:557px;top:66px;width:1px;height:14px;background:#ACA899;"></div>
<div class="a" style="left:543px;top:81px;width:16px;height:8px;background:#E8E7E1;"></div>
<div class="a" style="left:543px;top:81px;width:16px;height:1px;background:#F1EFE2;"></div>
<div class="a" style="left:543px;top:81px;width:1px;height:8px;background:#F1EFE2;"></div>
<div class="a" style="left:544px;top:82px;width:14px;height:1px;background:#FFFFFF;"></div>
<div class="a" style="left:544px;top:82px;width:1px;height:6px;background:#FFFFFF;"></div>
<div class="a" style="left:543px;top:88px;width:16px;height:1px;background:#404040;"></div>
<div class="a" style="left:558px;top:81px;width:1px;height:8px;background:#404040;"></div>
<div class="a" style="left:544px;top:87px;width:14px;height:1px;background:#ACA899;"></div>
<div class="a" style="left:557px;top:82px;width:1px;height:6px;background:#ACA899;"></div>
<div class="a" style="left:543px;top:207px;width:16px;height:16px;background:#E8E7E1;"></div>
<div class="a" style="left:543px;top:207px;width:16px;height:1px;background:#F1EFE2;"></div>
<div class="a" style="left:543px;top:207px;width:1px;height:16px;background:#F1EFE2;"></div>
<div class="a" style="left:544px;top:208px;width:14px;height:1px;background:#FFFFFF;"></div>
<div class="a" style="left:544px;top:208px;width:1px;height:14px;background:#FFFFFF;"></div>
<div class="a" style="left:543px;top:222px;width:16px;height:1px;background:#404040;"></div>
<div class="a" style="left:558px;top:207px;width:1px;height:16px;background:#404040;"></div>
<div class="a" style="left:544px;top:221px;width:14px;height:1px;background:#ACA899;"></div>
<div class="a" style="left:557px;top:208px;width:1px;height:14px;background:#ACA899;"></div>
<div class="a" style="left:13px;top:223px;width:530px;height:16px;background:#F4F3EE;"></div>
<div class="a" style="left:13px;top:223px;width:16px;height:16px;background:#E8E7E1;"></div>
<div class="a" style="left:13px;top:223px;width:16px;height:1px;background:#F1EFE2;"></div>
<div class="a" style="left:13px;top:223px;width:1px;height:16px;background:#F1EFE2;"></div>
<div class="a" style="left:14px;top:224px;width:14px;height:1px;background:#FFFFFF;"></div>
<div class="a" style="left:14px;top:224px;width:1px;height:14px;background:#FFFFFF;"></div>
<div class="a" style="left:13px;top:238px;width:16px;height:1px;background:#404040;"></div>
<div class="a" style="left:28px;top:223px;width:1px;height:16px;background:#404040;"></div>
<div class="a" style="left:14px;top:237px;width:14px;height:1px;background:#ACA899;"></div>
<div class="a" style="left:27px;top:224px;width:1px;height:14px;background:#ACA899;"></div>
<div class="a" style="left:29px;top:223px;width:454px;height:16px;background:#E8E7E1;"></div>
<div class="a" style="left:29px;top:223px;width:454px;height:1px;background:#F1EFE2;"></div>
<div class="a" style="left:29px;top:223px;width:1px;height:16px;background:#F1EFE2;"></div>
<div class="a" style="left:30px;top:224px;width:452px;height:1px;background:#FFFFFF;"></div>
<div class="a" style="left:30px;top:224px;width:1px;height:14px;background:#FFFFFF;"></div>
<div class="a" style="left:29px;top:238px;width:454px;height:1px;background:#404040;"></div>
<div class="a" style="left:482px;top:223px;width:1px;height:16px;background:#404040;"></div>
<div class="a" style="left:30px;top:237px;width:452px;height:1px;background:#ACA899;"></div>
<div class="a" style="left:481px;top:224px;width:1px;height:14px;background:#ACA899;"></div>
<div class="a" style="left:527px;top:223px;width:16px;height:16px;background:#E8E7E1;"></div>
<div class="a" style="left:527px;top:223px;width:16px;height:1px;background:#F1EFE2;"></div>
<div class="a" style="left:527px;top:223px;width:1px;height:16px;background:#F1EFE2;"></div>
<div class="a" style="left:528px;top:224px;width:14px;height:1px;background:#FFFFFF;"></div>
<div class="a" style="left:528px;top:224px;width:1px;height:14px;background:#FFFFFF;"></div>
<div class="a" style="left:527px;top:238px;width:16px;height:1px;background:#404040;"></div>
<div class="a" style="left:542px;top:223px;width:1px;height:16px;background:#404040;"></div>
<div class="a" style="left:528px;top:237px;width:14px;height:1px;background:#ACA899;"></div>
<div class="a" style="left:541px;top:224px;width:1px;height:14px;background:#ACA899;"></div>
<div class="a" style="left:543px;top:223px;width:16px;height:16px;background:#E8E7E1;"></div>
<svg class="ov" width="678" height="597" viewBox="0 0 678 597"><rect x="550" y="71" width="1" height="1" fill="#000"/><rect x="549" y="72" width="3" height="1" fill="#000"/><rect x="548" y="73" width="5" height="1" fill="#000"/><rect x="547" y="74" width="7" height="1" fill="#000"/><rect x="547" y="213" width="7" height="1" fill="#000"/><rect x="548" y="214" width="5" height="1" fill="#000"/><rect x="549" y="215" width="3" height="1" fill="#000"/><rect x="550" y="216" width="1" height="1" fill="#000"/><rect x="19" y="230" width="1" height="1" fill="#000"/><rect x="20" y="229" width="1" height="3" fill="#000"/><rect x="21" y="228" width="1" height="5" fill="#000"/><rect x="22" y="227" width="1" height="7" fill="#000"/><rect x="533" y="227" width="1" height="7" fill="#000"/><rect x="534" y="228" width="1" height="5" fill="#000"/><rect x="535" y="229" width="1" height="3" fill="#000"/><rect x="536" y="230" width="1" height="1" fill="#000"/></svg>
<div class="a" style="left:9px;top:246px;width:554px;height:1px;background:#F8F7F3;"></div>
<div class="a" style="left:9px;top:247px;width:554px;height:1px;background:#ACA899;"></div>
<div class="a" style="left:9px;top:248px;width:554px;height:1px;background:#F8F7F3;"></div>
<div class="a" style="left:8px;top:249px;width:555px;height:1px;background:#F5F4F0;"></div>
<div class="a" style="left:8px;top:249px;width:1px;height:164px;background:#F5F4F0;"></div>
<div class="a" style="left:9px;top:250px;width:554px;height:1px;background:#ACA899;"></div>
<div class="a" style="left:9px;top:250px;width:1px;height:163px;background:#ACA899;"></div>
<div class="a" style="left:9px;top:412px;width:554px;height:1px;background:#FFFFFF;"></div>
<div class="a" style="left:562px;top:250px;width:1px;height:163px;background:#FFFFFF;"></div>
<div class="a" style="left:10px;top:251px;width:552px;height:1px;background:#ACA899;"></div>
<div class="a" style="left:10px;top:251px;width:1px;height:161px;background:#ACA899;"></div>
<div class="a" style="left:10px;top:411px;width:552px;height:1px;background:#F1EFE2;"></div>
<div class="a" style="left:561px;top:251px;width:1px;height:161px;background:#F1EFE2;"></div>
<div class="a" style="left:11px;top:252px;width:550px;height:1px;background:#404040;"></div>
<div class="a" style="left:11px;top:252px;width:1px;height:159px;background:#404040;"></div>
<div class="a" style="left:11px;top:410px;width:550px;height:1px;background:#E8E7E1;"></div>
<div class="a" style="left:560px;top:252px;width:1px;height:159px;background:#E8E7E1;"></div>
<div class="a" style="left:12px;top:253px;width:548px;height:157px;background:#fff;"></div>
<div class="a" style="left:32px;top:270px;width:512px;height:17px;background:#000080;"></div>
<div class="t" style="left:35.00px;top:273px;color:#fff;letter-spacing:-0.220px;">Processus orga...</div>
<div class="t" style="left:125.00px;top:273px;color:#fff;letter-spacing:-0.189px;">Analyse de la panne véhicule</div>
<div class="t" style="left:279.00px;top:273px;color:#fff;letter-spacing:-0.450px;">Administrator</div>
<div class="t" style="left:352.00px;top:273px;color:#fff;letter-spacing:-0.220px;">00001</div>
<div class="t" style="left:415.00px;top:273px;color:#fff;letter-spacing:-0.220px;">0003</div>
<div class="t" style="left:35.00px;top:290px;letter-spacing:-0.220px;">Diagramme</div>
<div class="t" style="left:125.00px;top:290px;letter-spacing:-0.606px;">Logigramme</div>
<div class="t" style="left:279.00px;top:290px;letter-spacing:-0.450px;">Administrator</div>
<div class="t" style="left:352.00px;top:290px;letter-spacing:-0.220px;">00002</div>
<div class="t" style="left:415.00px;top:290px;letter-spacing:-0.220px;">0001</div>
<div class="t" style="left:35.00px;top:307px;letter-spacing:-0.220px;">Acteur</div>
<div class="t" style="left:125.00px;top:307px;letter-spacing:-0.220px;">Mécanicien</div>
<div class="t" style="left:279.00px;top:307px;letter-spacing:-0.450px;">Administrator</div>
<div class="t" style="left:352.00px;top:307px;letter-spacing:-0.220px;">00003</div>
<div class="t" style="left:415.00px;top:307px;letter-spacing:-0.220px;">0002</div>
<div class="t" style="left:35.00px;top:324px;letter-spacing:-0.220px;">Acteur</div>
<div class="t" style="left:125.00px;top:324px;letter-spacing:-0.220px;">Responsable des réparation...</div>
<div class="t" style="left:279.00px;top:324px;letter-spacing:-0.450px;">Administrator</div>
<div class="t" style="left:352.00px;top:324px;letter-spacing:-0.220px;">00004</div>
<div class="t" style="left:415.00px;top:324px;letter-spacing:-0.220px;">0004</div>
<div class="t" style="left:35.00px;top:341px;letter-spacing:-0.220px;">Condition</div>
<div class="t" style="left:125.00px;top:341px;letter-spacing:-0.220px;">Cas difficile</div>
<div class="t" style="left:279.00px;top:341px;letter-spacing:-0.450px;">Administrator</div>
<div class="t" style="left:352.00px;top:341px;letter-spacing:-0.220px;">00005</div>
<div class="t" style="left:415.00px;top:341px;letter-spacing:-0.220px;">0003</div>
<div class="t" style="left:35.00px;top:358px;letter-spacing:-0.220px;">Condition</div>
<div class="t" style="left:125.00px;top:358px;letter-spacing:-0.220px;">Type de problème</div>
<div class="t" style="left:279.00px;top:358px;letter-spacing:-0.450px;">Administrator</div>
<div class="t" style="left:352.00px;top:358px;letter-spacing:-0.220px;">00006</div>
<div class="t" style="left:415.00px;top:358px;letter-spacing:-0.220px;">0002</div>
<div class="t" style="left:35.00px;top:375px;letter-spacing:-0.220px;">Donnée de jeton</div>
<div class="t" style="left:125.00px;top:375px;letter-spacing:-0.220px;">Type de problème</div>
<div class="t" style="left:279.00px;top:375px;letter-spacing:-0.450px;">Administrator</div>
<div class="t" style="left:352.00px;top:375px;letter-spacing:-0.220px;">00007</div>
<div class="t" style="left:415.00px;top:375px;letter-spacing:-0.220px;">0001</div>
<div class="t" style="left:35.00px;top:391px;letter-spacing:-0.220px;">Condition</div>
<div class="t" style="left:125.00px;top:391px;letter-spacing:-0.220px;">Véhicule réparable</div>
<div class="t" style="left:279.00px;top:391px;letter-spacing:-0.450px;">Administrator</div>
<div class="t" style="left:352.00px;top:391px;letter-spacing:-0.220px;">00008</div>
<div class="t" style="left:415.00px;top:391px;letter-spacing:-0.220px;">0003</div>
<svg class="ov" width="678" height="597" viewBox="0 0 678 597"><polygon points="18,272 30,272 32,274 32,282 30,284 18,284 16,282 16,274" fill="#F07C7C" stroke="none"/><rect x="18" y="272" width="12" height="1" fill="#C03A36"/><rect x="18" y="283" width="12" height="1" fill="#C03A36"/><rect x="16" y="274" width="1" height="8" fill="#C03A36"/><rect x="31" y="274" width="1" height="8" fill="#C03A36"/><rect x="17" y="273" width="1" height="1" fill="#C03A36"/><rect x="30" y="273" width="1" height="1" fill="#C03A36"/><rect x="17" y="282" width="1" height="1" fill="#C03A36"/><rect x="30" y="282" width="1" height="1" fill="#C03A36"/><rect x="18" y="273" width="12" height="1" fill="#F49A9A"/><rect x="21" y="279" width="5" height="5" fill="#B03030"/><rect x="22" y="280" width="3" height="3" fill="#fff"/><rect x="23" y="280" width="1" height="3" fill="#000"/><rect x="22" y="281" width="3" height="1" fill="#000"/><rect x="29" y="280" width="1" height="2" fill="#A88"/><rect x="16" y="272" width="1" height="1" fill="#000080"/><rect x="18" y="272" width="1" height="1" fill="#000080"/><rect x="20" y="272" width="1" height="1" fill="#000080"/><rect x="22" y="272" width="1" height="1" fill="#000080"/><rect x="24" y="272" width="1" height="1" fill="#000080"/><rect x="26" y="272" width="1" height="1" fill="#000080"/><rect x="28" y="272" width="1" height="1" fill="#000080"/><rect x="30" y="272" width="1" height="1" fill="#000080"/><rect x="17" y="273" width="1" height="1" fill="#000080"/><rect x="19" y="273" width="1" height="1" fill="#000080"/><rect x="21" y="273" width="1" height="1" fill="#000080"/><rect x="23" y="273" width="1" height="1" fill="#000080"/><rect x="25" y="273" width="1" height="1" fill="#000080"/><rect x="27" y="273" width="1" height="1" fill="#000080"/><rect x="29" y="273" width="1" height="1" fill="#000080"/><rect x="31" y="273" width="1" height="1" fill="#000080"/><rect x="16" y="274" width="1" height="1" fill="#000080"/><rect x="18" y="274" width="1" height="1" fill="#000080"/><rect x="20" y="274" width="1" height="1" fill="#000080"/><rect x="22" y="274" width="1" height="1" fill="#000080"/><rect x="24" y="274" width="1" height="1" fill="#000080"/><rect x="26" y="274" width="1" height="1" fill="#000080"/><rect x="28" y="274" width="1" height="1" fill="#000080"/><rect x="30" y="274" width="1" height="1" fill="#000080"/><rect x="17" y="275" width="1" height="1" fill="#000080"/><rect x="19" y="275" width="1" height="1" fill="#000080"/><rect x="21" y="275" width="1" height="1" fill="#000080"/><rect x="23" y="275" width="1" height="1" fill="#000080"/><rect x="25" y="275" width="1" height="1" fill="#000080"/><rect x="27" y="275" width="1" height="1" fill="#000080"/><rect x="29" y="275" width="1" height="1" fill="#000080"/><rect x="31" y="275" width="1" height="1" fill="#000080"/><rect x="16" y="276" width="1" height="1" fill="#000080"/><rect x="18" y="276" width="1" height="1" fill="#000080"/><rect x="20" y="276" width="1" height="1" fill="#000080"/><rect x="22" y="276" width="1" height="1" fill="#000080"/><rect x="24" y="276" width="1" height="1" fill="#000080"/><rect x="26" y="276" width="1" height="1" fill="#000080"/><rect x="28" y="276" width="1" height="1" fill="#000080"/><rect x="30" y="276" width="1" height="1" fill="#000080"/><rect x="17" y="277" width="1" height="1" fill="#000080"/><rect x="19" y="277" width="1" height="1" fill="#000080"/><rect x="21" y="277" width="1" height="1" fill="#000080"/><rect x="23" y="277" width="1" height="1" fill="#000080"/><rect x="25" y="277" width="1" height="1" fill="#000080"/><rect x="27" y="277" width="1" height="1" fill="#000080"/><rect x="29" y="277" width="1" height="1" fill="#000080"/><rect x="31" y="277" width="1" height="1" fill="#000080"/><rect x="16" y="278" width="1" height="1" fill="#000080"/><rect x="18" y="278" width="1" height="1" fill="#000080"/><rect x="20" y="278" width="1" height="1" fill="#000080"/><rect x="22" y="278" width="1" height="1" fill="#000080"/><rect x="24" y="278" width="1" height="1" fill="#000080"/><rect x="26" y="278" width="1" height="1" fill="#000080"/><rect x="28" y="278" width="1" height="1" fill="#000080"/><rect x="30" y="278" width="1" height="1" fill="#000080"/><rect x="17" y="279" width="1" height="1" fill="#000080"/><rect x="19" y="279" width="1" height="1" fill="#000080"/><rect x="21" y="279" width="1" height="1" fill="#000080"/><rect x="23" y="279" width="1" height="1" fill="#000080"/><rect x="25" y="279" width="1" height="1" fill="#000080"/><rect x="27" y="279" width="1" height="1" fill="#000080"/><rect x="29" y="279" width="1" height="1" fill="#000080"/><rect x="31" y="279" width="1" height="1" fill="#000080"/><rect x="16" y="280" width="1" height="1" fill="#000080"/><rect x="18" y="280" width="1" height="1" fill="#000080"/><rect x="20" y="280" width="1" height="1" fill="#000080"/><rect x="22" y="280" width="1" height="1" fill="#000080"/><rect x="24" y="280" width="1" height="1" fill="#000080"/><rect x="26" y="280" width="1" height="1" fill="#000080"/><rect x="28" y="280" width="1" height="1" fill="#000080"/><rect x="30" y="280" width="1" height="1" fill="#000080"/><rect x="17" y="281" width="1" height="1" fill="#000080"/><rect x="19" y="281" width="1" height="1" fill="#000080"/><rect x="21" y="281" width="1" height="1" fill="#000080"/><rect x="23" y="281" width="1" height="1" fill="#000080"/><rect x="25" y="281" width="1" height="1" fill="#000080"/><rect x="27" y="281" width="1" height="1" fill="#000080"/><rect x="29" y="281" width="1" height="1" fill="#000080"/><rect x="31" y="281" width="1" height="1" fill="#000080"/><rect x="16" y="282" width="1" height="1" fill="#000080"/><rect x="18" y="282" width="1" height="1" fill="#000080"/><rect x="20" y="282" width="1" height="1" fill="#000080"/><rect x="22" y="282" width="1" height="1" fill="#000080"/><rect x="24" y="282" width="1" height="1" fill="#000080"/><rect x="26" y="282" width="1" height="1" fill="#000080"/><rect x="28" y="282" width="1" height="1" fill="#000080"/><rect x="30" y="282" width="1" height="1" fill="#000080"/><rect x="17" y="283" width="1" height="1" fill="#000080"/><rect x="19" y="283" width="1" height="1" fill="#000080"/><rect x="21" y="283" width="1" height="1" fill="#000080"/><rect x="23" y="283" width="1" height="1" fill="#000080"/><rect x="25" y="283" width="1" height="1" fill="#000080"/><rect x="27" y="283" width="1" height="1" fill="#000080"/><rect x="29" y="283" width="1" height="1" fill="#000080"/><rect x="31" y="283" width="1" height="1" fill="#000080"/><rect x="16" y="289" width="15" height="14" fill="#5A64A8"/><rect x="17" y="290" width="13" height="12" fill="#C4D8F6"/><rect x="27" y="289" width="4" height="3" fill="#fff"/><polygon points="27,289 31,293 27,293" fill="#7090D0"/><rect x="31" y="293" width="1" height="10" fill="#5A64A8"/><rect x="17" y="290" width="4" height="1" fill="#40D040"/><rect x="22" y="290" width="4" height="1" fill="#A0E8F8"/><rect x="17" y="291" width="12" height="1" fill="#0000FF"/><rect x="21" y="290" width="1" height="12" fill="#0000FF"/><rect x="26" y="290" width="1" height="12" fill="#0000FF"/><rect x="17" y="293" width="3" height="1" fill="#0000FF"/><rect x="19" y="293" width="1" height="3" fill="#0000FF"/><rect x="17" y="295" width="3" height="1" fill="#0000FF"/><rect x="22" y="294" width="4" height="3" fill="#C8C000"/><rect x="23" y="295" width="2" height="1" fill="#FFFF00"/><rect x="23" y="297" width="1" height="3" fill="#0000FF"/><rect x="23" y="299" width="7" height="1" fill="#0000FF"/><rect x="16" y="297" width="3" height="3" fill="#202020"/><rect x="17" y="298" width="2" height="2" fill="#FF6010"/><rect x="16" y="300" width="4" height="3" fill="#3060E0"/><rect x="25" y="304" width="2" height="1" fill="#0000FF"/><rect x="24" y="305" width="4" height="2" fill="#0000FF"/><rect x="25" y="307" width="2" height="1" fill="#0000FF"/><rect x="25" y="305" width="2" height="2" fill="#3366FF"/><rect x="21" y="307" width="2" height="1" fill="#0000FF"/><rect x="20" y="308" width="4" height="2" fill="#0000FF"/><rect x="21" y="310" width="2" height="1" fill="#0000FF"/><rect x="21" y="308" width="2" height="2" fill="#3366FF"/><rect x="25" y="309" width="6" height="2" fill="#0000FF"/><rect x="30" y="309" width="2" height="8" fill="#0000FF"/><rect x="28" y="311" width="1" height="1" fill="#0000FF"/><rect x="16" y="312" width="12" height="2" fill="#0000FF"/><rect x="16" y="313" width="2" height="6" fill="#0000FF"/><rect x="26" y="313" width="2" height="6" fill="#0000FF"/><rect x="19" y="314" width="6" height="5" fill="#3366FF"/><rect x="19" y="314" width="1" height="5" fill="#0000FF"/><rect x="24" y="314" width="1" height="5" fill="#0000FF"/><rect x="25" y="321" width="2" height="1" fill="#0000FF"/><rect x="24" y="322" width="4" height="2" fill="#0000FF"/><rect x="25" y="324" width="2" height="1" fill="#0000FF"/><rect x="25" y="322" width="2" height="2" fill="#3366FF"/><rect x="21" y="324" width="2" height="1" fill="#0000FF"/><rect x="20" y="325" width="4" height="2" fill="#0000FF"/><rect x="21" y="327" width="2" height="1" fill="#0000FF"/><rect x="21" y="325" width="2" height="2" fill="#3366FF"/><rect x="25" y="326" width="6" height="2" fill="#0000FF"/><rect x="30" y="326" width="2" height="8" fill="#0000FF"/><rect x="28" y="328" width="1" height="1" fill="#0000FF"/><rect x="16" y="329" width="12" height="2" fill="#0000FF"/><rect x="16" y="330" width="2" height="6" fill="#0000FF"/><rect x="26" y="330" width="2" height="6" fill="#0000FF"/><rect x="19" y="331" width="6" height="5" fill="#3366FF"/><rect x="19" y="331" width="1" height="5" fill="#0000FF"/><rect x="24" y="331" width="1" height="5" fill="#0000FF"/><rect x="22" y="339" width="3" height="1" fill="#0000FF"/><rect x="21" y="340" width="5" height="1" fill="#0000FF"/><rect x="20" y="341" width="7" height="1" fill="#0000FF"/><rect x="19" y="342" width="9" height="1" fill="#0000FF"/><rect x="18" y="343" width="11" height="1" fill="#0000FF"/><rect x="17" y="344" width="13" height="1" fill="#0000FF"/><rect x="16" y="345" width="15" height="1" fill="#0000FF"/><rect x="16" y="346" width="15" height="1" fill="#0000FF"/><rect x="17" y="347" width="13" height="1" fill="#0000FF"/><rect x="18" y="348" width="11" height="1" fill="#0000FF"/><rect x="19" y="349" width="9" height="1" fill="#0000FF"/><rect x="20" y="350" width="7" height="1" fill="#0000FF"/><rect x="21" y="351" width="5" height="1" fill="#0000FF"/><rect x="22" y="352" width="3" height="1" fill="#0000FF"/><rect x="21" y="342" width="5" height="1" fill="#fff"/><rect x="20" y="343" width="3" height="1" fill="#fff"/><rect x="25" y="343" width="2" height="1" fill="#fff"/><rect x="20" y="344" width="2" height="1" fill="#fff"/><rect x="24" y="344" width="3" height="1" fill="#fff"/><rect x="22" y="345" width="4" height="1" fill="#fff"/><rect x="22" y="346" width="3" height="1" fill="#fff"/><rect x="22" y="347" width="3" height="1" fill="#fff"/><rect x="22" y="349" width="3" height="1" fill="#fff"/><rect x="22" y="350" width="3" height="1" fill="#fff"/><rect x="22" y="356" width="3" height="1" fill="#0000FF"/><rect x="21" y="357" width="5" height="1" fill="#0000FF"/><rect x="20" y="358" width="7" height="1" fill="#0000FF"/><rect x="19" y="359" width="9" height="1" fill="#0000FF"/><rect x="18" y="360" width="11" height="1" fill="#0000FF"/><rect x="17" y="361" width="13" height="1" fill="#0000FF"/><rect x="16" y="362" width="15" height="1" fill="#0000FF"/><rect x="16" y="363" width="15" height="1" fill="#0000FF"/><rect x="17" y="364" width="13" height="1" fill="#0000FF"/><rect x="18" y="365" width="11" height="1" fill="#0000FF"/><rect x="19" y="366" width="9" height="1" fill="#0000FF"/><rect x="20" y="367" width="7" height="1" fill="#0000FF"/><rect x="21" y="368" width="5" height="1" fill="#0000FF"/><rect x="22" y="369" width="3" height="1" fill="#0000FF"/><rect x="21" y="359" width="5" height="1" fill="#fff"/><rect x="20" y="360" width="3" height="1" fill="#fff"/><rect x="25" y="360" width="2" height="1" fill="#fff"/><rect x="20" y="361" width="2" height="1" fill="#fff"/><rect x="24" y="361" width="3" height="1" fill="#fff"/><rect x="22" y="362" width="4" height="1" fill="#fff"/><rect x="22" y="363" width="3" height="1" fill="#fff"/><rect x="22" y="364" width="3" height="1" fill="#fff"/><rect x="22" y="366" width="3" height="1" fill="#fff"/><rect x="22" y="367" width="3" height="1" fill="#fff"/><circle cx="24.5" cy="375.5" r="2.4" fill="#0A0AF0"/><circle cx="20.5" cy="383.5" r="2.4" fill="#F01010"/><circle cx="28.5" cy="383.5" r="2.4" fill="#0A7A10"/><rect x="22" y="390" width="3" height="1" fill="#0000FF"/><rect x="21" y="391" width="5" height="1" fill="#0000FF"/><rect x="20" y="392" width="7" height="1" fill="#0000FF"/><rect x="19" y="393" width="9" height="1" fill="#0000FF"/><rect x="18" y="394" width="11" height="1" fill="#0000FF"/><rect x="17" y="395" width="13" height="1" fill="#0000FF"/><rect x="16" y="396" width="15" height="1" fill="#0000FF"/><rect x="16" y="397" width="15" height="1" fill="#0000FF"/><rect x="17" y="398" width="13" height="1" fill="#0000FF"/><rect x="18" y="399" width="11" height="1" fill="#0000FF"/><rect x="19" y="400" width="9" height="1" fill="#0000FF"/><rect x="20" y="401" width="7" height="1" fill="#0000FF"/><rect x="21" y="402" width="5" height="1" fill="#0000FF"/><rect x="22" y="403" width="3" height="1" fill="#0000FF"/><rect x="21" y="393" width="5" height="1" fill="#fff"/><rect x="20" y="394" width="3" height="1" fill="#fff"/><rect x="25" y="394" width="2" height="1" fill="#fff"/><rect x="20" y="395" width="2" height="1" fill="#fff"/><rect x="24" y="395" width="3" height="1" fill="#fff"/><rect x="22" y="396" width="4" height="1" fill="#fff"/><rect x="22" y="397" width="3" height="1" fill="#fff"/><rect x="22" y="398" width="3" height="1" fill="#fff"/><rect x="22" y="400" width="3" height="1" fill="#fff"/><rect x="22" y="401" width="3" height="1" fill="#fff"/></svg>
<div class="a" style="left:12px;top:253px;width:107px;height:17px;background:#E8E7E1;"></div>
<div class="a" style="left:12px;top:253px;width:106px;height:1px;background:#FFFFFF;"></div>
<div class="a" style="left:12px;top:253px;width:1px;height:16px;background:#FFFFFF;"></div>
<div class="a" style="left:12px;top:269px;width:107px;height:1px;background:#404040;"></div>
<div class="a" style="left:118px;top:253px;width:1px;height:17px;background:#404040;"></div>
<div class="a" style="left:13px;top:268px;width:105px;height:1px;background:#ACA899;"></div>
<div class="a" style="left:117px;top:254px;width:1px;height:15px;background:#ACA899;"></div>
<div class="a" style="left:119px;top:253px;width:154px;height:17px;background:#E8E7E1;"></div>
<div class="a" style="left:119px;top:253px;width:153px;height:1px;background:#FFFFFF;"></div>
<div class="a" style="left:119px;top:253px;width:1px;height:16px;background:#FFFFFF;"></div>
<div class="a" style="left:119px;top:269px;width:154px;height:1px;background:#404040;"></div>
<div class="a" style="left:272px;top:253px;width:1px;height:17px;background:#404040;"></div>
<div class="a" style="left:120px;top:268px;width:152px;height:1px;background:#ACA899;"></div>
<div class="a" style="left:271px;top:254px;width:1px;height:15px;background:#ACA899;"></div>
<div class="a" style="left:273px;top:253px;width:73px;height:17px;background:#E8E7E1;"></div>
<div class="a" style="left:273px;top:253px;width:72px;height:1px;background:#FFFFFF;"></div>
<div class="a" style="left:273px;top:253px;width:1px;height:16px;background:#FFFFFF;"></div>
<div class="a" style="left:273px;top:269px;width:73px;height:1px;background:#404040;"></div>
<div class="a" style="left:345px;top:253px;width:1px;height:17px;background:#404040;"></div>
<div class="a" style="left:274px;top:268px;width:71px;height:1px;background:#ACA899;"></div>
<div class="a" style="left:344px;top:254px;width:1px;height:15px;background:#ACA899;"></div>
<div class="a" style="left:346px;top:253px;width:63px;height:17px;background:#E8E7E1;"></div>
<div class="a" style="left:346px;top:253px;width:62px;height:1px;background:#FFFFFF;"></div>
<div class="a" style="left:346px;top:253px;width:1px;height:16px;background:#FFFFFF;"></div>
<div class="a" style="left:346px;top:269px;width:63px;height:1px;background:#404040;"></div>
<div class="a" style="left:408px;top:253px;width:1px;height:17px;background:#404040;"></div>
<div class="a" style="left:347px;top:268px;width:61px;height:1px;background:#ACA899;"></div>
<div class="a" style="left:407px;top:254px;width:1px;height:15px;background:#ACA899;"></div>
<div class="a" style="left:409px;top:253px;width:68px;height:17px;background:#E8E7E1;"></div>
<div class="a" style="left:409px;top:253px;width:67px;height:1px;background:#FFFFFF;"></div>
<div class="a" style="left:409px;top:253px;width:1px;height:16px;background:#FFFFFF;"></div>
<div class="a" style="left:409px;top:269px;width:68px;height:1px;background:#404040;"></div>
<div class="a" style="left:476px;top:253px;width:1px;height:17px;background:#404040;"></div>
<div class="a" style="left:410px;top:268px;width:66px;height:1px;background:#ACA899;"></div>
<div class="a" style="left:475px;top:254px;width:1px;height:15px;background:#ACA899;"></div>
<div class="a" style="left:477px;top:253px;width:83px;height:17px;background:#E8E7E1;"></div>
<div class="a" style="left:477px;top:253px;width:82px;height:1px;background:#FFFFFF;"></div>
<div class="a" style="left:477px;top:253px;width:1px;height:16px;background:#FFFFFF;"></div>
<div class="a" style="left:477px;top:269px;width:83px;height:1px;background:#404040;"></div>
<div class="a" style="left:559px;top:253px;width:1px;height:17px;background:#404040;"></div>
<div class="a" style="left:478px;top:268px;width:81px;height:1px;background:#ACA899;"></div>
<div class="a" style="left:558px;top:254px;width:1px;height:15px;background:#ACA899;"></div>
<div class="t" style="left:18.00px;top:256px;letter-spacing:-0.220px;">Type</div>
<div class="t" style="left:125.00px;top:256px;letter-spacing:-0.406px;">Nom court</div>
<div class="t" style="left:279.00px;top:256px;letter-spacing:-0.220px;">Protection</div>
<div class="t" style="left:352.00px;top:256px;letter-spacing:-0.220px;">No Objet</div>
<div class="t" style="left:415.00px;top:256px;letter-spacing:-0.344px;">Nb chemins</div>
<div class="t" style="left:483.00px;top:256px;letter-spacing:-0.600px;">Commentaire</div>
<div class="a" style="left:544px;top:253px;width:16px;height:141px;background:#F4F3EE;"></div>
<div class="a" style="left:544px;top:253px;width:16px;height:16px;background:#E8E7E1;"></div>
<div class="a" style="left:544px;top:253px;width:16px;height:1px;background:#F1EFE2;"></div>
<div class="a" style="left:544px;top:253px;width:1px;height:16px;background:#F1EFE2;"></div>
<div class="a" style="left:545px;top:254px;width:14px;height:1px;background:#FFFFFF;"></div>
<div class="a" style="left:545px;top:254px;width:1px;height:14px;background:#FFFFFF;"></div>
<div class="a" style="left:544px;top:268px;width:16px;height:1px;background:#404040;"></div>
<div class="a" style="left:559px;top:253px;width:1px;height:16px;background:#404040;"></div>
<div class="a" style="left:545px;top:267px;width:14px;height:1px;background:#ACA899;"></div>
<div class="a" style="left:558px;top:254px;width:1px;height:14px;background:#ACA899;"></div>
<div class="a" style="left:544px;top:269px;width:16px;height:10px;background:#E8E7E1;"></div>
<div class="a" style="left:544px;top:269px;width:16px;height:1px;background:#F1EFE2;"></div>
<div class="a" style="left:544px;top:269px;width:1px;height:10px;background:#F1EFE2;"></div>
<div class="a" style="left:545px;top:270px;width:14px;height:1px;background:#FFFFFF;"></div>
<div class="a" style="left:545px;top:270px;width:1px;height:8px;background:#FFFFFF;"></div>
<div class="a" style="left:544px;top:278px;width:16px;height:1px;background:#404040;"></div>
<div class="a" style="left:559px;top:269px;width:1px;height:10px;background:#404040;"></div>
<div class="a" style="left:545px;top:277px;width:14px;height:1px;background:#ACA899;"></div>
<div class="a" style="left:558px;top:270px;width:1px;height:8px;background:#ACA899;"></div>
<div class="a" style="left:544px;top:378px;width:16px;height:16px;background:#E8E7E1;"></div>
<div class="a" style="left:544px;top:378px;width:16px;height:1px;background:#F1EFE2;"></div>
<div class="a" style="left:544px;top:378px;width:1px;height:16px;background:#F1EFE2;"></div>
<div class="a" style="left:545px;top:379px;width:14px;height:1px;background:#FFFFFF;"></div>
<div class="a" style="left:545px;top:379px;width:1px;height:14px;background:#FFFFFF;"></div>
<div class="a" style="left:544px;top:393px;width:16px;height:1px;background:#404040;"></div>
<div class="a" style="left:559px;top:378px;width:1px;height:16px;background:#404040;"></div>
<div class="a" style="left:545px;top:392px;width:14px;height:1px;background:#ACA899;"></div>
<div class="a" style="left:558px;top:379px;width:1px;height:14px;background:#ACA899;"></div>
<div class="a" style="left:12px;top:394px;width:532px;height:16px;background:#F4F3EE;"></div>
<div class="a" style="left:12px;top:394px;width:16px;height:16px;background:#E8E7E1;"></div>
<div class="a" style="left:12px;top:394px;width:16px;height:1px;background:#F1EFE2;"></div>
<div class="a" style="left:12px;top:394px;width:1px;height:16px;background:#F1EFE2;"></div>
<div class="a" style="left:13px;top:395px;width:14px;height:1px;background:#FFFFFF;"></div>
<div class="a" style="left:13px;top:395px;width:1px;height:14px;background:#FFFFFF;"></div>
<div class="a" style="left:12px;top:409px;width:16px;height:1px;background:#404040;"></div>
<div class="a" style="left:27px;top:394px;width:1px;height:16px;background:#404040;"></div>
<div class="a" style="left:13px;top:408px;width:14px;height:1px;background:#ACA899;"></div>
<div class="a" style="left:26px;top:395px;width:1px;height:14px;background:#ACA899;"></div>
<div class="a" style="left:28px;top:394px;width:309px;height:16px;background:#E8E7E1;"></div>
<div class="a" style="left:28px;top:394px;width:309px;height:1px;background:#F1EFE2;"></div>
<div class="a" style="left:28px;top:394px;width:1px;height:16px;background:#F1EFE2;"></div>
<div class="a" style="left:29px;top:395px;width:307px;height:1px;background:#FFFFFF;"></div>
<div class="a" style="left:29px;top:395px;width:1px;height:14px;background:#FFFFFF;"></div>
<div class="a" style="left:28px;top:409px;width:309px;height:1px;background:#404040;"></div>
<div class="a" style="left:336px;top:394px;width:1px;height:16px;background:#404040;"></div>
<div class="a" style="left:29px;top:408px;width:307px;height:1px;background:#ACA899;"></div>
<div class="a" style="left:335px;top:395px;width:1px;height:14px;background:#ACA899;"></div>
<div class="a" style="left:528px;top:394px;width:16px;height:16px;background:#E8E7E1;"></div>
<div class="a" style="left:528px;top:394px;width:16px;height:1px;background:#F1EFE2;"></div>
<div class="a" style="left:528px;top:394px;width:1px;height:16px;background:#F1EFE2;"></div>
<div class="a" style="left:529px;top:395px;width:14px;height:1px;background:#FFFFFF;"></div>
<div class="a" style="left:529px;top:395px;width:1px;height:14px;background:#FFFFFF;"></div>
<div class="a" style="left:528px;top:409px;width:16px;height:1px;background:#404040;"></div>
<div class="a" style="left:543px;top:394px;width:1px;height:16px;background:#404040;"></div>
<div class="a" style="left:529px;top:408px;width:14px;height:1px;background:#ACA899;"></div>
<div class="a" style="left:542px;top:395px;width:1px;height:14px;background:#ACA899;"></div>
<div class="a" style="left:544px;top:394px;width:16px;height:16px;background:#E8E7E1;"></div>
<svg class="ov" width="678" height="597" viewBox="0 0 678 597"><rect x="551" y="259" width="1" height="1" fill="#000"/><rect x="550" y="260" width="3" height="1" fill="#000"/><rect x="549" y="261" width="5" height="1" fill="#000"/><rect x="548" y="262" width="7" height="1" fill="#000"/><rect x="548" y="384" width="7" height="1" fill="#000"/><rect x="549" y="385" width="5" height="1" fill="#000"/><rect x="550" y="386" width="3" height="1" fill="#000"/><rect x="551" y="387" width="1" height="1" fill="#000"/><rect x="18" y="401" width="1" height="1" fill="#000"/><rect x="19" y="400" width="1" height="3" fill="#000"/><rect x="20" y="399" width="1" height="5" fill="#000"/><rect x="21" y="398" width="1" height="7" fill="#000"/><rect x="534" y="398" width="1" height="7" fill="#000"/><rect x="535" y="399" width="1" height="5" fill="#000"/><rect x="536" y="400" width="1" height="3" fill="#000"/><rect x="537" y="401" width="1" height="1" fill="#000"/></svg>
<div class="a" style="left:9px;top:416px;width:554px;height:1px;background:#F8F7F3;"></div>
<div class="a" style="left:9px;top:417px;width:554px;height:1px;background:#ACA899;"></div>
<div class="a" style="left:9px;top:418px;width:554px;height:1px;background:#F8F7F3;"></div>
<div class="a" style="left:8px;top:419px;width:555px;height:1px;background:#F5F4F0;"></div>
<div class="a" style="left:8px;top:419px;width:1px;height:100px;background:#F5F4F0;"></div>
<div class="a" style="left:9px;top:420px;width:554px;height:1px;background:#ACA899;"></div>
<div class="a" style="left:9px;top:420px;width:1px;height:99px;background:#ACA899;"></div>
<div class="a" style="left:9px;top:518px;width:554px;height:1px;background:#FFFFFF;"></div>
<div class="a" style="left:562px;top:420px;width:1px;height:99px;background:#FFFFFF;"></div>
<div class="a" style="left:10px;top:421px;width:552px;height:1px;background:#ACA899;"></div>
<div class="a" style="left:10px;top:421px;width:1px;height:97px;background:#ACA899;"></div>
<div class="a" style="left:10px;top:517px;width:552px;height:1px;background:#F1EFE2;"></div>
<div class="a" style="left:561px;top:421px;width:1px;height:97px;background:#F1EFE2;"></div>
<div class="a" style="left:11px;top:422px;width:550px;height:1px;background:#404040;"></div>
<div class="a" style="left:11px;top:422px;width:1px;height:95px;background:#404040;"></div>
<div class="a" style="left:11px;top:516px;width:550px;height:1px;background:#E8E7E1;"></div>
<div class="a" style="left:560px;top:422px;width:1px;height:95px;background:#E8E7E1;"></div>
<div class="a" style="left:12px;top:423px;width:548px;height:93px;background:#fff;"></div>
<div class="a" style="left:12px;top:423px;width:80px;height:17px;background:#E8E7E1;"></div>
<div class="a" style="left:12px;top:423px;width:79px;height:1px;background:#FFFFFF;"></div>
<div class="a" style="left:12px;top:423px;width:1px;height:16px;background:#FFFFFF;"></div>
<div class="a" style="left:12px;top:439px;width:80px;height:1px;background:#404040;"></div>
<div class="a" style="left:91px;top:423px;width:1px;height:17px;background:#404040;"></div>
<div class="a" style="left:13px;top:438px;width:78px;height:1px;background:#ACA899;"></div>
<div class="a" style="left:90px;top:424px;width:1px;height:15px;background:#ACA899;"></div>
<div class="a" style="left:92px;top:423px;width:120px;height:17px;background:#E8E7E1;"></div>
<div class="a" style="left:92px;top:423px;width:119px;height:1px;background:#FFFFFF;"></div>
<div class="a" style="left:92px;top:423px;width:1px;height:16px;background:#FFFFFF;"></div>
<div class="a" style="left:92px;top:439px;width:120px;height:1px;background:#404040;"></div>
<div class="a" style="left:211px;top:423px;width:1px;height:17px;background:#404040;"></div>
<div class="a" style="left:93px;top:438px;width:118px;height:1px;background:#ACA899;"></div>
<div class="a" style="left:210px;top:424px;width:1px;height:15px;background:#ACA899;"></div>
<div class="a" style="left:212px;top:423px;width:348px;height:17px;background:#E8E7E1;"></div>
<div class="a" style="left:212px;top:423px;width:347px;height:1px;background:#FFFFFF;"></div>
<div class="a" style="left:212px;top:423px;width:1px;height:16px;background:#FFFFFF;"></div>
<div class="a" style="left:212px;top:439px;width:348px;height:1px;background:#404040;"></div>
<div class="a" style="left:559px;top:423px;width:1px;height:17px;background:#404040;"></div>
<div class="a" style="left:213px;top:438px;width:346px;height:1px;background:#ACA899;"></div>
<div class="a" style="left:558px;top:424px;width:1px;height:15px;background:#ACA899;"></div>
<div class="a" style="left:557px;top:424px;width:3px;height:14px;background:#E8E7E1;"></div>
<div class="a" style="left:557px;top:423px;width:3px;height:1px;background:#FFFFFF;"></div>
<div class="a" style="left:557px;top:438px;width:3px;height:1px;background:#ACA899;"></div>
<div class="a" style="left:557px;top:439px;width:3px;height:1px;background:#404040;"></div>
<div class="a" style="left:12px;top:423px;width:548px;height:93px;overflow:hidden">
<div class="t" style="left:6.00px;top:3px;letter-spacing:0.195px;">Objet/Chemin</div>
<div class="t" style="left:87.00px;top:3px;letter-spacing:-0.225px;">MetaAssociationType</div>
<div class="t" style="left:207.00px;top:3px;letter-spacing:-0.263px;">Liste des chemins analysés pour un objet impacté</div>
<div class="t" style="left:6.00px;top:20px;letter-spacing:-0.033px;">00001/0003</div>
<div class="t" style="left:87.00px;top:20px;letter-spacing:-0.350px;">Modélisation</div>
<div class="t" style="left:206.00px;top:20px;letter-spacing:-0.080px;">/Analyse de la panne véhicule/Logigramme avec services applicatifs/Analyse</div>
<div class="t" style="left:6.00px;top:37px;letter-spacing:-0.033px;">00001/0002</div>
<div class="t" style="left:87.00px;top:37px;letter-spacing:-0.350px;">Modélisation</div>
<div class="t" style="left:206.00px;top:37px;letter-spacing:-0.080px;">/Analyse de la panne véhicule/Logigramme/Analyse de la panne véhicule</div>
<div class="t" style="left:6.00px;top:54px;letter-spacing:-0.033px;">00001/0001</div>
<div class="t" style="left:206.00px;top:54px;letter-spacing:-0.080px;">/Analyse de la panne véhicule</div>
</div>
<div class="a" style="left:12px;top:500px;width:548px;height:16px;background:#F4F3EE;"></div>
<div class="a" style="left:12px;top:500px;width:16px;height:16px;background:#E8E7E1;"></div>
<div class="a" style="left:12px;top:500px;width:16px;height:1px;background:#F1EFE2;"></div>
<div class="a" style="left:12px;top:500px;width:1px;height:16px;background:#F1EFE2;"></div>
<div class="a" style="left:13px;top:501px;width:14px;height:1px;background:#FFFFFF;"></div>
<div class="a" style="left:13px;top:501px;width:1px;height:14px;background:#FFFFFF;"></div>
<div class="a" style="left:12px;top:515px;width:16px;height:1px;background:#404040;"></div>
<div class="a" style="left:27px;top:500px;width:1px;height:16px;background:#404040;"></div>
<div class="a" style="left:13px;top:514px;width:14px;height:1px;background:#ACA899;"></div>
<div class="a" style="left:26px;top:501px;width:1px;height:14px;background:#ACA899;"></div>
<div class="a" style="left:28px;top:500px;width:28px;height:16px;background:#E8E7E1;"></div>
<div class="a" style="left:28px;top:500px;width:28px;height:1px;background:#F1EFE2;"></div>
<div class="a" style="left:28px;top:500px;width:1px;height:16px;background:#F1EFE2;"></div>
<div class="a" style="left:29px;top:501px;width:26px;height:1px;background:#FFFFFF;"></div>
<div class="a" style="left:29px;top:501px;width:1px;height:14px;background:#FFFFFF;"></div>
<div class="a" style="left:28px;top:515px;width:28px;height:1px;background:#404040;"></div>
<div class="a" style="left:55px;top:500px;width:1px;height:16px;background:#404040;"></div>
<div class="a" style="left:29px;top:514px;width:26px;height:1px;background:#ACA899;"></div>
<div class="a" style="left:54px;top:501px;width:1px;height:14px;background:#ACA899;"></div>
<div class="a" style="left:544px;top:500px;width:16px;height:16px;background:#E8E7E1;"></div>
<div class="a" style="left:544px;top:500px;width:16px;height:1px;background:#F1EFE2;"></div>
<div class="a" style="left:544px;top:500px;width:1px;height:16px;background:#F1EFE2;"></div>
<div class="a" style="left:545px;top:501px;width:14px;height:1px;background:#FFFFFF;"></div>
<div class="a" style="left:545px;top:501px;width:1px;height:14px;background:#FFFFFF;"></div>
<div class="a" style="left:544px;top:515px;width:16px;height:1px;background:#404040;"></div>
<div class="a" style="left:559px;top:500px;width:1px;height:16px;background:#404040;"></div>
<div class="a" style="left:545px;top:514px;width:14px;height:1px;background:#ACA899;"></div>
<div class="a" style="left:558px;top:501px;width:1px;height:14px;background:#ACA899;"></div>
<svg class="ov" width="678" height="597" viewBox="0 0 678 597"><rect x="18" y="507" width="1" height="1" fill="#000"/><rect x="19" y="506" width="1" height="3" fill="#000"/><rect x="20" y="505" width="1" height="5" fill="#000"/><rect x="21" y="504" width="1" height="7" fill="#000"/><rect x="550" y="504" width="1" height="7" fill="#000"/><rect x="551" y="505" width="1" height="5" fill="#000"/><rect x="552" y="506" width="1" height="3" fill="#000"/><rect x="553" y="507" width="1" height="1" fill="#000"/></svg>
<div class="a" style="left:9px;top:526px;width:13px;height:13px;background:#fff;"></div>
<div class="a" style="left:9px;top:526px;width:13px;height:1px;background:#ACA899;"></div>
<div class="a" style="left:9px;top:526px;width:1px;height:13px;background:#ACA899;"></div>
<div class="a" style="left:10px;top:527px;width:11px;height:1px;background:#404040;"></div>
<div class="a" style="left:10px;top:527px;width:1px;height:11px;background:#404040;"></div>
<div class="a" style="left:10px;top:537px;width:11px;height:1px;background:#F1EFE2;"></div>
<div class="a" style="left:20px;top:527px;width:1px;height:11px;background:#F1EFE2;"></div>
<div class="a" style="left:9px;top:538px;width:13px;height:1px;background:#FFFFFF;"></div>
<div class="a" style="left:21px;top:526px;width:1px;height:13px;background:#FFFFFF;"></div>
<div class="t" style="left:27.00px;top:527px;letter-spacing:-0.188px;">Afficher aussi l&#x27;icône du comportement du MetaAssociationType</div>
<div class="a" style="left:9px;top:552px;width:13px;height:13px;background:#fff;"></div>
<div class="a" style="left:9px;top:552px;width:13px;height:1px;background:#ACA899;"></div>
<div class="a" style="left:9px;top:552px;width:1px;height:13px;background:#ACA899;"></div>
<div class="a" style="left:10px;top:553px;width:11px;height:1px;background:#404040;"></div>
<div class="a" style="left:10px;top:553px;width:1px;height:11px;background:#404040;"></div>
<div class="a" style="left:10px;top:563px;width:11px;height:1px;background:#F1EFE2;"></div>
<div class="a" style="left:20px;top:553px;width:1px;height:11px;background:#F1EFE2;"></div>
<div class="a" style="left:9px;top:564px;width:13px;height:1px;background:#FFFFFF;"></div>
<div class="a" style="left:21px;top:552px;width:1px;height:13px;background:#FFFFFF;"></div>
<div class="t" style="left:27.00px;top:553px;letter-spacing:-0.219px;">Afficher en gras les objets découverts par le premier chemin valide</div>
<div class="a" style="left:7px;top:576px;width:147px;height:1px;background:#ACA899;"></div>
<div class="a" style="left:7px;top:576px;width:1px;height:17px;background:#ACA899;"></div>
<div class="a" style="left:7px;top:592px;width:147px;height:1px;background:#F8F7F3;"></div>
<div class="a" style="left:153px;top:576px;width:1px;height:17px;background:#F8F7F3;"></div>
<div class="a" style="left:162px;top:576px;width:494px;height:1px;background:#ACA899;"></div>
<div class="a" style="left:162px;top:576px;width:1px;height:17px;background:#ACA899;"></div>
<div class="a" style="left:162px;top:592px;width:494px;height:1px;background:#F8F7F3;"></div>
<div class="a" style="left:655px;top:576px;width:1px;height:17px;background:#F8F7F3;"></div>
<div class="t" style="left:163.00px;top:578px;letter-spacing:-0.347px;">Chemins analysés: 151</div>
<div class="t" style="left:289.00px;top:578px;letter-spacing:-0.190px;">Objets impactés trouvés: 75</div>
<div class="a" style="left:0px;top:596px;width:678px;height:1px;background:#ACA899;"></div>
<svg class="ov" width="678" height="597" viewBox="0 0 678 597"><rect x="18" y="555" width="1" height="1" fill="#000"/><rect x="17" y="556" width="1" height="1" fill="#000"/><rect x="18" y="556" width="1" height="1" fill="#000"/><rect x="12" y="557" width="1" height="1" fill="#000"/><rect x="16" y="557" width="1" height="1" fill="#000"/><rect x="17" y="557" width="1" height="1" fill="#000"/><rect x="18" y="557" width="1" height="1" fill="#000"/><rect x="12" y="558" width="1" height="1" fill="#000"/><rect x="13" y="558" width="1" height="1" fill="#000"/><rect x="15" y="558" width="1" height="1" fill="#000"/><rect x="16" y="558" width="1" height="1" fill="#000"/><rect x="17" y="558" width="1" height="1" fill="#000"/><rect x="12" y="559" width="1" height="1" fill="#000"/><rect x="13" y="559" width="1" height="1" fill="#000"/><rect x="14" y="559" width="1" height="1" fill="#000"/><rect x="15" y="559" width="1" height="1" fill="#000"/><rect x="16" y="559" width="1" height="1" fill="#000"/><rect x="13" y="560" width="1" height="1" fill="#000"/><rect x="14" y="560" width="1" height="1" fill="#000"/><rect x="15" y="560" width="1" height="1" fill="#000"/><rect x="14" y="561" width="1" height="1" fill="#000"/><path d="M665 593 L675 583" stroke="#ACA899" stroke-width="1.5"/><path d="M669 593 L675 587" stroke="#ACA899" stroke-width="1.5"/><path d="M673 593 L675 591" stroke="#ACA899" stroke-width="1.5"/></svg>
<svg class="ov" width="678" height="597" viewBox="0 0 678 597"></svg>
</body></html>
